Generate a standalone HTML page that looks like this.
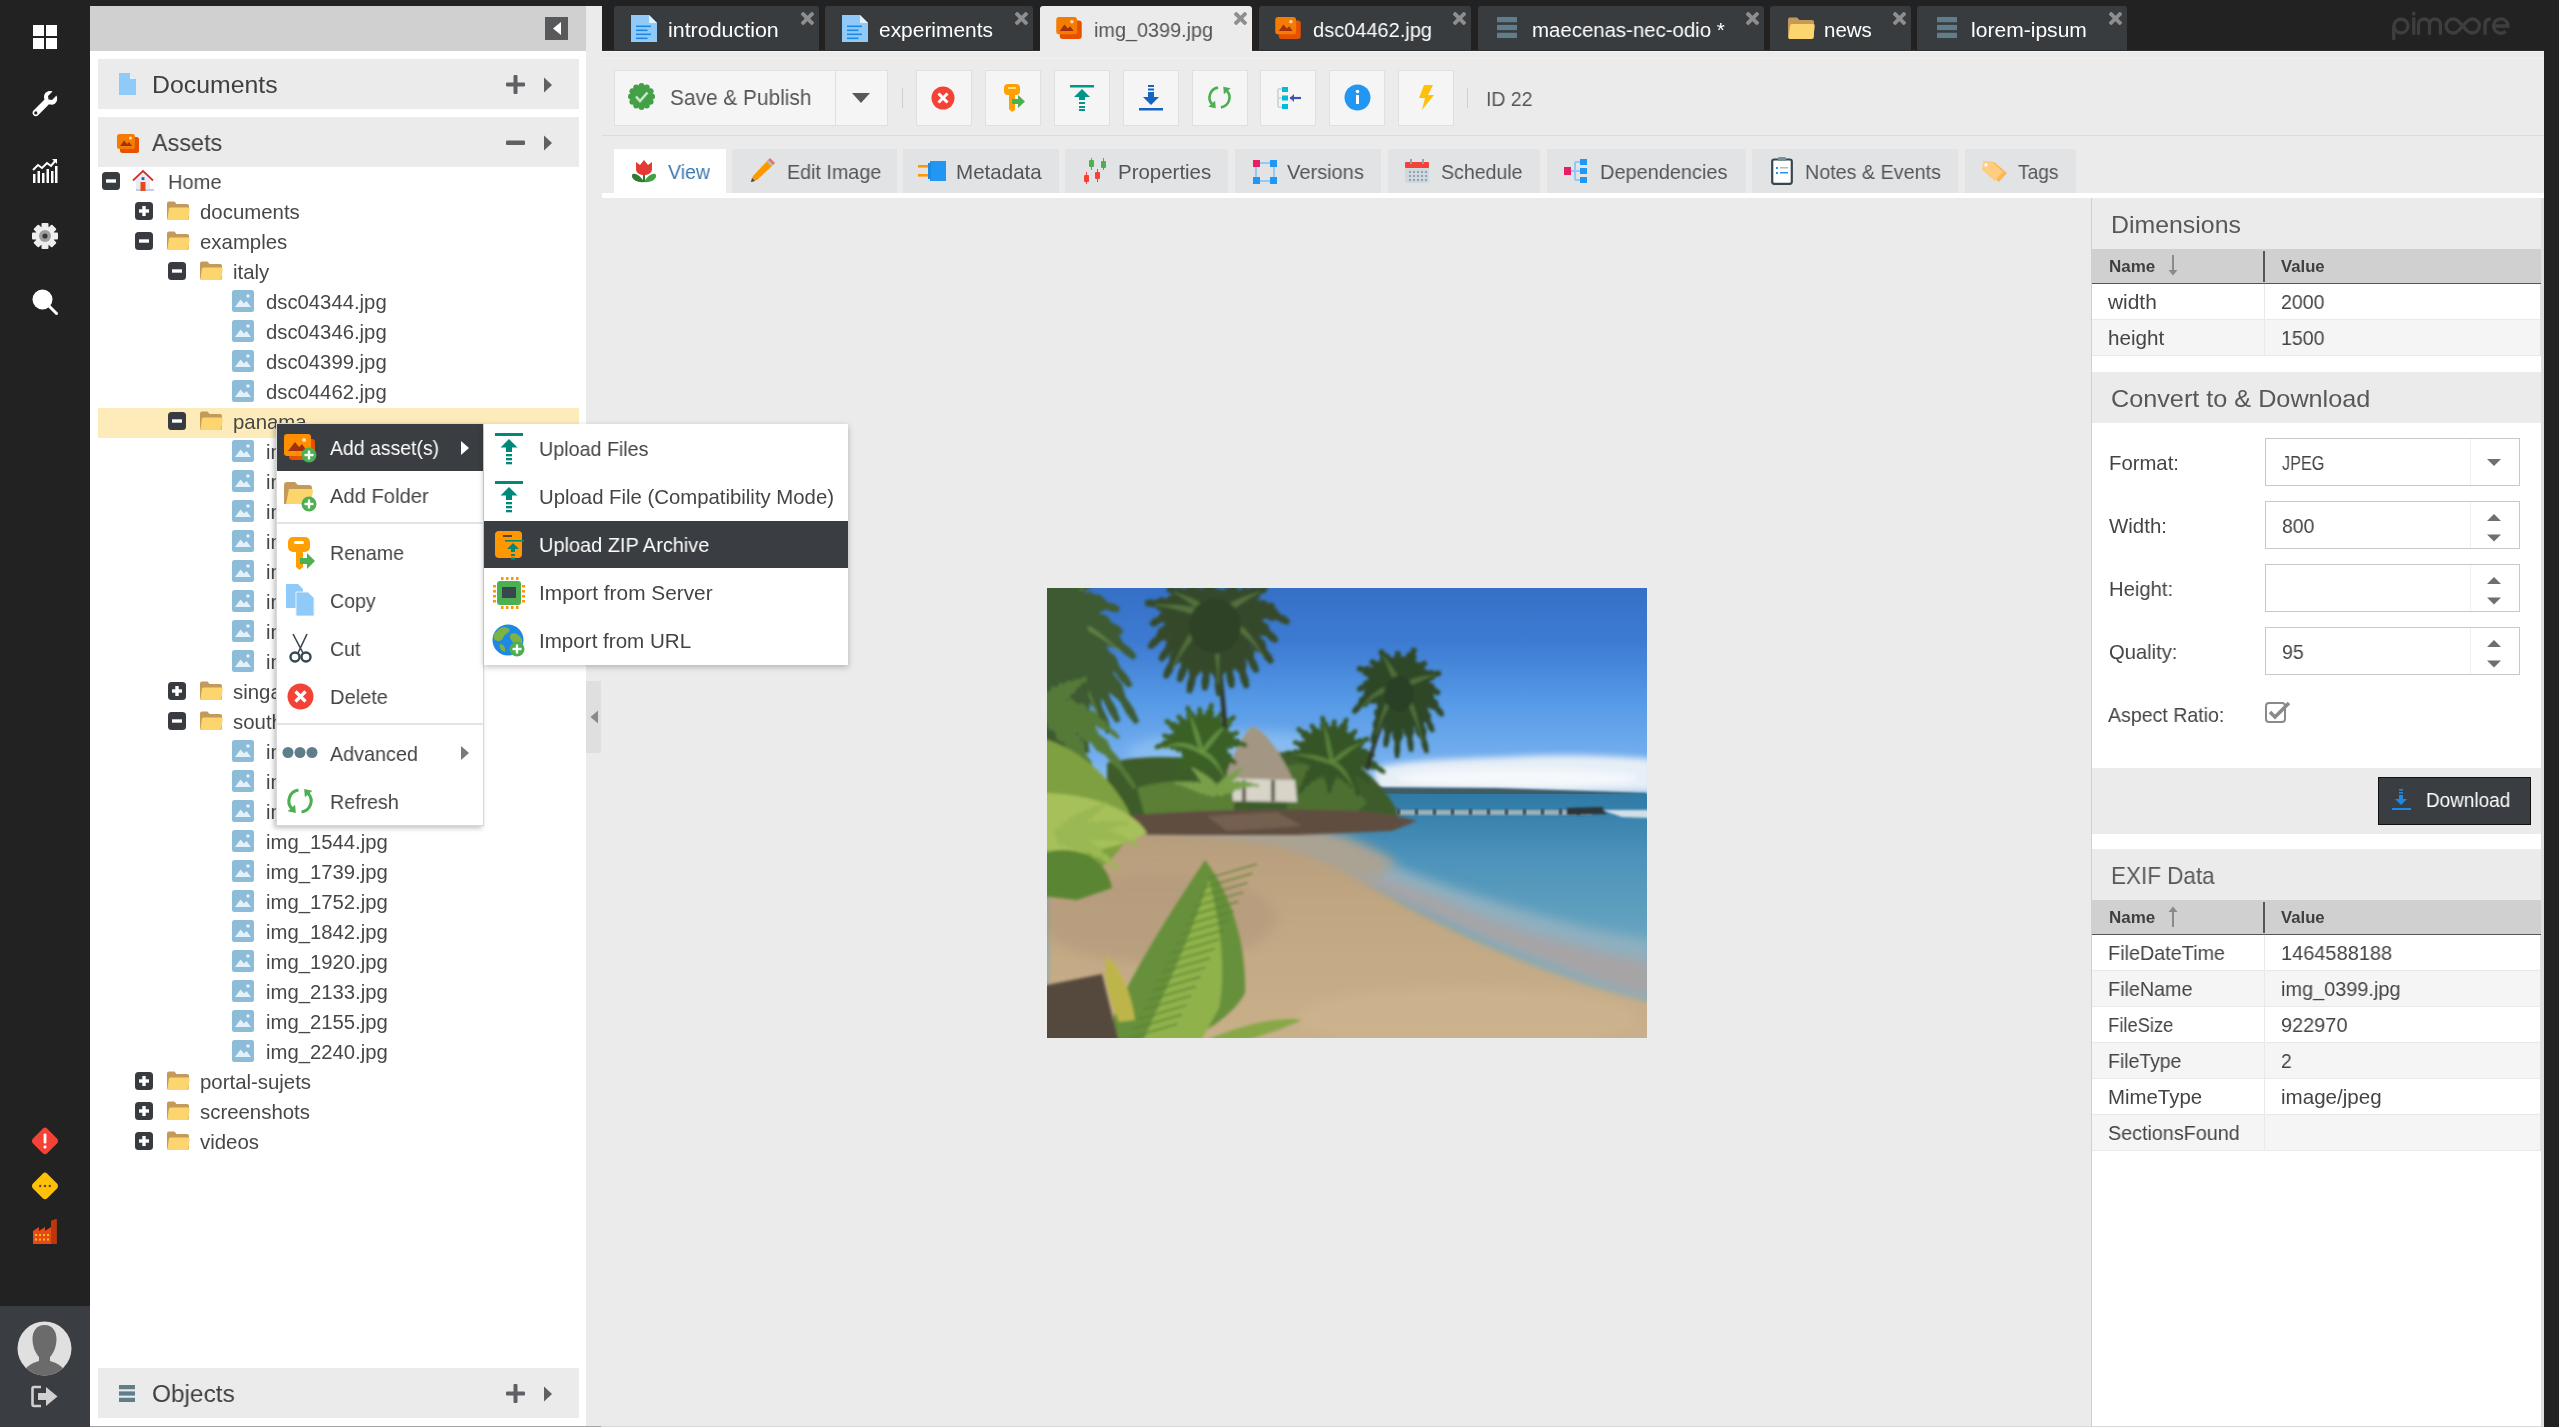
<!DOCTYPE html><html><head><meta charset="utf-8"><style>
*{margin:0;padding:0;box-sizing:border-box}
html,body{width:2559px;height:1427px;overflow:hidden}
body{background:#222;font-family:"Liberation Sans", sans-serif;position:relative}
.a{position:absolute}
.t{white-space:nowrap;line-height:1;will-change:transform}
</style></head><body>
<div class="a" style="left:0;top:1306px;width:90px;height:121px;background:#3a3d41"></div>
<svg class="a" style="left:33px;top:25px" width="24" height="24" viewBox="0 0 24 24"><rect x="0" y="0" width="11" height="11" fill="#fff"/><rect x="13" y="0" width="11" height="11" fill="#fff"/><rect x="0" y="13" width="11" height="11" fill="#fff"/><rect x="13" y="13" width="11" height="11" fill="#fff"/></svg>
<svg class="a" style="left:31px;top:89px" width="28" height="28" viewBox="0 0 28 28"><path d="M25.5 6.5 L21 11 L17.5 10.5 L17 7 L21.5 2.5 C17.5 1 13 3.5 13 8 C13 9 13.2 9.8 13.5 10.6 L2.5 21.6 C1.2 22.9 1.2 25 2.5 26.2 C3.8 27.5 5.8 27.5 7.1 26.2 L18 15.3 C18.8 15.6 19.7 15.8 20.6 15.8 C25 15.8 27.5 11 25.5 6.5 Z" fill="#fff"/><circle cx="4.8" cy="23.9" r="1.6" fill="#222"/></svg>
<svg class="a" style="left:32px;top:158px" width="26" height="25" viewBox="0 0 26 25"><path d="M1 12 L6 7 L10 10 L15 5 L19 8 L24 2" stroke="#fff" stroke-width="2" fill="none"/><path d="M20 1 L25 1 L25 6 Z" fill="#fff"/><rect x="1" y="16" width="2.5" height="9" fill="#fff"/><rect x="5.5" y="13" width="2.5" height="12" fill="#fff"/><rect x="10" y="15" width="2.5" height="10" fill="#fff"/><rect x="14.5" y="11" width="2.5" height="14" fill="#fff"/><rect x="19" y="13" width="2.5" height="12" fill="#fff"/><rect x="23" y="8" width="2.5" height="17" fill="#fff"/></svg>
<svg class="a" style="left:32px;top:223px" width="26" height="26" viewBox="0 0 26 26"><g transform="translate(13,13)"><rect x="-3.5" y="-13" width="7" height="6" rx="1" fill="#eee" transform="rotate(0)"/><rect x="-3.5" y="-13" width="7" height="6" rx="1" fill="#eee" transform="rotate(45)"/><rect x="-3.5" y="-13" width="7" height="6" rx="1" fill="#eee" transform="rotate(90)"/><rect x="-3.5" y="-13" width="7" height="6" rx="1" fill="#eee" transform="rotate(135)"/><rect x="-3.5" y="-13" width="7" height="6" rx="1" fill="#eee" transform="rotate(180)"/><rect x="-3.5" y="-13" width="7" height="6" rx="1" fill="#eee" transform="rotate(225)"/><rect x="-3.5" y="-13" width="7" height="6" rx="1" fill="#eee" transform="rotate(270)"/><rect x="-3.5" y="-13" width="7" height="6" rx="1" fill="#eee" transform="rotate(315)"/><circle r="9.5" fill="#eee"/><circle r="6" fill="#9e9e9e"/><circle r="2.6" fill="#3a3a3a"/></g></svg>
<svg class="a" style="left:32px;top:289px" width="26" height="26" viewBox="0 0 26 26"><circle cx="10.5" cy="10.5" r="10" fill="#fff"/><path d="M17 17 L24.5 24.5" stroke="#fff" stroke-width="3" stroke-linecap="round"/></svg>
<svg class="a" style="left:31px;top:1127px" width="28" height="28" viewBox="0 0 28 28"><path d="M14 0.5 Q15 0.5 16 1.5 L26.5 12 Q27.5 14 26.5 16 L16 26.5 Q14 27.8 12 26.5 L1.5 16 Q0.3 14 1.5 12 L12 1.5 Q13 0.5 14 0.5 Z" fill="#f44336"/><rect x="12.6" y="6.5" width="2.8" height="10" rx="1" fill="#fff"/><rect x="12.6" y="18.6" width="2.8" height="2.8" rx="1" fill="#fff"/></svg>
<svg class="a" style="left:31px;top:1172px" width="28" height="28" viewBox="0 0 28 28"><path d="M14 0.5 Q15 0.5 16 1.5 L26.5 12 Q27.5 14 26.5 16 L16 26.5 Q14 27.8 12 26.5 L1.5 16 Q0.3 14 1.5 12 L12 1.5 Q13 0.5 14 0.5 Z" fill="#ffc107"/><circle cx="9.2" cy="14" r="1.2" fill="#5d4037"/><circle cx="14" cy="14" r="1.2" fill="#5d4037"/><circle cx="18.8" cy="14" r="1.2" fill="#5d4037"/></svg>
<svg class="a" style="left:33px;top:1219px" width="24" height="25" viewBox="0 0 24 25"><path d="M0 12 L6 8 L6 12 L12 8 L12 12 L18 8 L18 2 L23.5 0 L23.5 25 L0 25 Z" fill="#e64a19"/><path d="M18 2 L23.5 0 L23.5 25 L18 25 Z" fill="#bf360c"/><rect x="2" y="15.0" width="2" height="2" fill="#ffc107"/><rect x="2" y="19.5" width="2" height="2" fill="#ffc107"/><rect x="6" y="15.0" width="2" height="2" fill="#ffc107"/><rect x="6" y="19.5" width="2" height="2" fill="#ffc107"/><rect x="10" y="15.0" width="2" height="2" fill="#ffc107"/><rect x="10" y="19.5" width="2" height="2" fill="#ffc107"/><rect x="14" y="15.0" width="2" height="2" fill="#ffc107"/><rect x="14" y="19.5" width="2" height="2" fill="#ffc107"/></svg>
<svg class="a" style="left:17px;top:1321px" width="55" height="55" viewBox="0 0 55 55"><defs><clipPath id="avc"><circle cx="27.5" cy="27.5" r="27"/></clipPath></defs><circle cx="27.5" cy="27.5" r="27" fill="#e0e0e0"/><g clip-path="url(#avc)"><path d="M27.5 4 C19 4 15.5 11 15.5 18 C15.5 26 19 33 22 36 L22 40 C14 42 7 47 4 55 L51 55 C48 47 41 42 33 40 L33 36 C36 33 39.5 26 39.5 18 C39.5 11 36 4 27.5 4 Z" fill="#6b6b6b"/></g></svg>
<svg class="a" style="left:31px;top:1385px" width="28" height="23" viewBox="0 0 28 23"><path d="M10 2 L3 2 Q1.5 2 1.5 3.5 L1.5 19.5 Q1.5 21 3 21 L10 21" stroke="#d0d0d0" stroke-width="2.6" fill="none"/><path d="M7 8 L15 8 L15 2 L26.5 11.5 L15 21 L15 15 L7 15 Z" fill="#d0d0d0"/></svg>
<div class="a" style="left:90px;top:6px;width:496px;height:1421px;background:#fff"></div>
<div class="a" style="left:90px;top:6px;width:496px;height:45px;background:#d0d0d0"></div>
<div class="a" style="left:545px;top:17px;width:23px;height:23px;background:#58595b"></div>
<svg class="a" style="left:551px;top:21px" width="12" height="15" viewBox="0 0 12 15"><path d="M10 1 L2 7.5 L10 14 Z" fill="#fff"/></svg>
<div class="a" style="left:98px;top:59px;width:481px;height:50px;background:#ebebeb"></div>
<svg class="a" style="left:119px;top:73px" width="17" height="22" viewBox="0 0 17 22"><path d="M0 0 L11 0 L17 6 L17 22 L0 22 Z" fill="#90caf9"/><path d="M11 0 L17 6 L11 6 Z" fill="#e3f2fd"/></svg>
<div class="a t" style="left:152px;top:72.61px;font-size:24.8px;color:#404040;font-weight:normal;transform:scaleX(1.0013);transform-origin:0 0;">Documents</div>
<svg class="a" style="left:505px;top:74px" width="21" height="21" viewBox="0 0 21 21"><rect x="8.5" y="1" width="4" height="19" rx="1" fill="#5f6063"/><rect x="1" y="8.5" width="19" height="4" rx="1" fill="#5f6063"/></svg>
<svg class="a" style="left:543px;top:77px" width="10" height="16" viewBox="0 0 10 16"><path d="M1 0.5 L9 8 L1 15.5 Z" fill="#5f6063"/></svg>
<div class="a" style="left:98px;top:117px;width:481px;height:50px;background:#ebebeb"></div>
<svg class="a" style="left:117px;top:134px" width="22" height="19" viewBox="0 0 22 19"><rect x="3" y="3" width="19" height="16" rx="2.5" fill="#e65100"/><rect x="0" y="0" width="18" height="15" rx="2.5" fill="#f57c00"/><path d="M3 12 L7 6.5 L10 10 L12 8 L15 12 Z" fill="#a1300c"/><circle cx="13.5" cy="4" r="1.5" fill="#ffe0b2"/></svg>
<div class="a t" style="left:152px;top:130.61px;font-size:24.8px;color:#404040;font-weight:normal;transform:scaleX(0.9432);transform-origin:0 0;">Assets</div>
<svg class="a" style="left:505px;top:132px" width="21" height="21" viewBox="0 0 21 21"><rect x="1" y="8.5" width="19" height="4.5" rx="1" fill="#5f6063"/></svg>
<svg class="a" style="left:543px;top:135px" width="10" height="16" viewBox="0 0 10 16"><path d="M1 0.5 L9 8 L1 15.5 Z" fill="#5f6063"/></svg>
<div class="a" style="left:98px;top:1368px;width:481px;height:50px;background:#ebebeb"></div>
<svg class="a" style="left:119px;top:1385px" width="16" height="17" viewBox="0 0 16 17"><rect x="0" y="0" width="16" height="4.25" fill="#607d8b"/><rect x="0" y="6.375" width="16" height="4.25" fill="#607d8b"/><rect x="0" y="12.75" width="16" height="4.25" fill="#607d8b"/></svg>
<div class="a t" style="left:152px;top:1381.61px;font-size:24.8px;color:#404040;font-weight:normal;transform:scaleX(0.9836);transform-origin:0 0;">Objects</div>
<svg class="a" style="left:505px;top:1383px" width="21" height="21" viewBox="0 0 21 21"><rect x="8.5" y="1" width="4" height="19" rx="1" fill="#5f6063"/><rect x="1" y="8.5" width="19" height="4" rx="1" fill="#5f6063"/></svg>
<svg class="a" style="left:543px;top:1386px" width="10" height="16" viewBox="0 0 10 16"><path d="M1 0.5 L9 8 L1 15.5 Z" fill="#5f6063"/></svg>
<div class="a" style="left:98px;top:408px;width:481px;height:30px;background:#fdebb9"></div>
<svg class="a" style="left:102px;top:172px" width="18" height="18" viewBox="0 0 18 18"><rect x="0" y="0" width="18" height="18" rx="3.5" fill="#383b3f"/><rect x="4" y="7.3" width="10" height="3.4" fill="#fff"/></svg>
<svg class="a" style="left:132px;top:169px" width="23" height="23" viewBox="0 0 23 23"><path d="M4 11 L4 21 L18 21 L18 11 L11 5 Z" fill="#e8eaf6"/><rect x="4" y="20" width="18" height="2" fill="#c5cae9"/><path d="M1 11.5 L11 2 L21 11.5" stroke="#d32f2f" stroke-width="1.8" fill="none"/><rect x="8.5" y="13" width="5" height="9" fill="#e64a19"/><rect x="9.6" y="8.2" width="2.8" height="2.8" fill="#1565c0"/></svg>
<div class="a t" style="left:167.5px;top:171.96px;font-size:20.6px;color:#474747;font-weight:normal;transform:scaleX(0.9754);transform-origin:0 0;">Home</div>
<svg class="a" style="left:135px;top:202px" width="18" height="18" viewBox="0 0 18 18"><rect x="0" y="0" width="18" height="18" rx="3.5" fill="#383b3f"/><rect x="4" y="7.3" width="10" height="3.4" fill="#fff"/><rect x="7.3" y="4" width="3.4" height="10" fill="#fff"/></svg>
<svg class="a" style="left:166px;top:201px" width="24" height="20" viewBox="0 0 24 20"><path d="M1 2.5 Q1 0.5 3 0.5 L8.5 0.5 L10.5 3 L21 3 Q23 3 23 5 L23 17 Q23 19 21 19 L3 19 Q1 19 1 17 Z" fill="#c49a5a"/><path d="M4.5 6.5 L22 6.5 Q24 6.5 23.7 8.5 L22.5 17 Q22.2 19 20.2 19 L3 19 Q1.3 19 1.6 17 L2.8 8.3 Q3 6.5 4.5 6.5 Z" fill="#fdd56e"/></svg>
<div class="a t" style="left:200px;top:202.13px;font-size:20.4px;color:#474747;font-weight:normal;">documents</div>
<svg class="a" style="left:135px;top:232px" width="18" height="18" viewBox="0 0 18 18"><rect x="0" y="0" width="18" height="18" rx="3.5" fill="#383b3f"/><rect x="4" y="7.3" width="10" height="3.4" fill="#fff"/></svg>
<svg class="a" style="left:166px;top:231px" width="24" height="20" viewBox="0 0 24 20"><path d="M1 2.5 Q1 0.5 3 0.5 L8.5 0.5 L10.5 3 L21 3 Q23 3 23 5 L23 17 Q23 19 21 19 L3 19 Q1 19 1 17 Z" fill="#c49a5a"/><path d="M4.5 6.5 L22 6.5 Q24 6.5 23.7 8.5 L22.5 17 Q22.2 19 20.2 19 L3 19 Q1.3 19 1.6 17 L2.8 8.3 Q3 6.5 4.5 6.5 Z" fill="#fdd56e"/></svg>
<div class="a t" style="left:200px;top:232.13px;font-size:20.4px;color:#474747;font-weight:normal;">examples</div>
<svg class="a" style="left:168px;top:262px" width="18" height="18" viewBox="0 0 18 18"><rect x="0" y="0" width="18" height="18" rx="3.5" fill="#383b3f"/><rect x="4" y="7.3" width="10" height="3.4" fill="#fff"/></svg>
<svg class="a" style="left:199px;top:261px" width="24" height="20" viewBox="0 0 24 20"><path d="M1 2.5 Q1 0.5 3 0.5 L8.5 0.5 L10.5 3 L21 3 Q23 3 23 5 L23 17 Q23 19 21 19 L3 19 Q1 19 1 17 Z" fill="#c49a5a"/><path d="M4.5 6.5 L22 6.5 Q24 6.5 23.7 8.5 L22.5 17 Q22.2 19 20.2 19 L3 19 Q1.3 19 1.6 17 L2.8 8.3 Q3 6.5 4.5 6.5 Z" fill="#fdd56e"/></svg>
<div class="a t" style="left:233px;top:262.13px;font-size:20.4px;color:#474747;font-weight:normal;">italy</div>
<svg class="a" style="left:232px;top:290px" width="22" height="22" viewBox="0 0 22 22"><rect x="0" y="0" width="22" height="22" rx="2.5" fill="#8dbcd8"/><path d="M3 17 L8.5 9.5 L12 13.5 L14.5 11 L19 17 Z" fill="#e3f1fa"/><circle cx="16" cy="6" r="1.8" fill="#e3f1fa"/></svg>
<div class="a t" style="left:265.5px;top:292.22px;font-size:20.3px;color:#474747;font-weight:normal;">dsc04344.jpg</div>
<svg class="a" style="left:232px;top:320px" width="22" height="22" viewBox="0 0 22 22"><rect x="0" y="0" width="22" height="22" rx="2.5" fill="#8dbcd8"/><path d="M3 17 L8.5 9.5 L12 13.5 L14.5 11 L19 17 Z" fill="#e3f1fa"/><circle cx="16" cy="6" r="1.8" fill="#e3f1fa"/></svg>
<div class="a t" style="left:265.5px;top:322.22px;font-size:20.3px;color:#474747;font-weight:normal;">dsc04346.jpg</div>
<svg class="a" style="left:232px;top:350px" width="22" height="22" viewBox="0 0 22 22"><rect x="0" y="0" width="22" height="22" rx="2.5" fill="#8dbcd8"/><path d="M3 17 L8.5 9.5 L12 13.5 L14.5 11 L19 17 Z" fill="#e3f1fa"/><circle cx="16" cy="6" r="1.8" fill="#e3f1fa"/></svg>
<div class="a t" style="left:265.5px;top:352.22px;font-size:20.3px;color:#474747;font-weight:normal;">dsc04399.jpg</div>
<svg class="a" style="left:232px;top:380px" width="22" height="22" viewBox="0 0 22 22"><rect x="0" y="0" width="22" height="22" rx="2.5" fill="#8dbcd8"/><path d="M3 17 L8.5 9.5 L12 13.5 L14.5 11 L19 17 Z" fill="#e3f1fa"/><circle cx="16" cy="6" r="1.8" fill="#e3f1fa"/></svg>
<div class="a t" style="left:265.5px;top:382.22px;font-size:20.3px;color:#474747;font-weight:normal;">dsc04462.jpg</div>
<svg class="a" style="left:168px;top:412px" width="18" height="18" viewBox="0 0 18 18"><rect x="0" y="0" width="18" height="18" rx="3.5" fill="#383b3f"/><rect x="4" y="7.3" width="10" height="3.4" fill="#fff"/></svg>
<svg class="a" style="left:199px;top:411px" width="24" height="20" viewBox="0 0 24 20"><path d="M1 2.5 Q1 0.5 3 0.5 L8.5 0.5 L10.5 3 L21 3 Q23 3 23 5 L23 17 Q23 19 21 19 L3 19 Q1 19 1 17 Z" fill="#c49a5a"/><path d="M4.5 6.5 L22 6.5 Q24 6.5 23.7 8.5 L22.5 17 Q22.2 19 20.2 19 L3 19 Q1.3 19 1.6 17 L2.8 8.3 Q3 6.5 4.5 6.5 Z" fill="#fdd56e"/></svg>
<div class="a t" style="left:233px;top:412.13px;font-size:20.4px;color:#474747;font-weight:normal;">panama</div>
<svg class="a" style="left:232px;top:440px" width="22" height="22" viewBox="0 0 22 22"><rect x="0" y="0" width="22" height="22" rx="2.5" fill="#8dbcd8"/><path d="M3 17 L8.5 9.5 L12 13.5 L14.5 11 L19 17 Z" fill="#e3f1fa"/><circle cx="16" cy="6" r="1.8" fill="#e3f1fa"/></svg>
<div class="a t" style="left:265.5px;top:442.22px;font-size:20.3px;color:#474747;font-weight:normal;">img_0037.jpg</div>
<svg class="a" style="left:232px;top:470px" width="22" height="22" viewBox="0 0 22 22"><rect x="0" y="0" width="22" height="22" rx="2.5" fill="#8dbcd8"/><path d="M3 17 L8.5 9.5 L12 13.5 L14.5 11 L19 17 Z" fill="#e3f1fa"/><circle cx="16" cy="6" r="1.8" fill="#e3f1fa"/></svg>
<div class="a t" style="left:265.5px;top:472.22px;font-size:20.3px;color:#474747;font-weight:normal;">img_0037.jpg</div>
<svg class="a" style="left:232px;top:500px" width="22" height="22" viewBox="0 0 22 22"><rect x="0" y="0" width="22" height="22" rx="2.5" fill="#8dbcd8"/><path d="M3 17 L8.5 9.5 L12 13.5 L14.5 11 L19 17 Z" fill="#e3f1fa"/><circle cx="16" cy="6" r="1.8" fill="#e3f1fa"/></svg>
<div class="a t" style="left:265.5px;top:502.22px;font-size:20.3px;color:#474747;font-weight:normal;">img_0037.jpg</div>
<svg class="a" style="left:232px;top:530px" width="22" height="22" viewBox="0 0 22 22"><rect x="0" y="0" width="22" height="22" rx="2.5" fill="#8dbcd8"/><path d="M3 17 L8.5 9.5 L12 13.5 L14.5 11 L19 17 Z" fill="#e3f1fa"/><circle cx="16" cy="6" r="1.8" fill="#e3f1fa"/></svg>
<div class="a t" style="left:265.5px;top:532.22px;font-size:20.3px;color:#474747;font-weight:normal;">img_0037.jpg</div>
<svg class="a" style="left:232px;top:560px" width="22" height="22" viewBox="0 0 22 22"><rect x="0" y="0" width="22" height="22" rx="2.5" fill="#8dbcd8"/><path d="M3 17 L8.5 9.5 L12 13.5 L14.5 11 L19 17 Z" fill="#e3f1fa"/><circle cx="16" cy="6" r="1.8" fill="#e3f1fa"/></svg>
<div class="a t" style="left:265.5px;top:562.22px;font-size:20.3px;color:#474747;font-weight:normal;">img_0037.jpg</div>
<svg class="a" style="left:232px;top:590px" width="22" height="22" viewBox="0 0 22 22"><rect x="0" y="0" width="22" height="22" rx="2.5" fill="#8dbcd8"/><path d="M3 17 L8.5 9.5 L12 13.5 L14.5 11 L19 17 Z" fill="#e3f1fa"/><circle cx="16" cy="6" r="1.8" fill="#e3f1fa"/></svg>
<div class="a t" style="left:265.5px;top:592.22px;font-size:20.3px;color:#474747;font-weight:normal;">img_0037.jpg</div>
<svg class="a" style="left:232px;top:620px" width="22" height="22" viewBox="0 0 22 22"><rect x="0" y="0" width="22" height="22" rx="2.5" fill="#8dbcd8"/><path d="M3 17 L8.5 9.5 L12 13.5 L14.5 11 L19 17 Z" fill="#e3f1fa"/><circle cx="16" cy="6" r="1.8" fill="#e3f1fa"/></svg>
<div class="a t" style="left:265.5px;top:622.22px;font-size:20.3px;color:#474747;font-weight:normal;">img_0037.jpg</div>
<svg class="a" style="left:232px;top:650px" width="22" height="22" viewBox="0 0 22 22"><rect x="0" y="0" width="22" height="22" rx="2.5" fill="#8dbcd8"/><path d="M3 17 L8.5 9.5 L12 13.5 L14.5 11 L19 17 Z" fill="#e3f1fa"/><circle cx="16" cy="6" r="1.8" fill="#e3f1fa"/></svg>
<div class="a t" style="left:265.5px;top:652.22px;font-size:20.3px;color:#474747;font-weight:normal;">img_0037.jpg</div>
<svg class="a" style="left:168px;top:682px" width="18" height="18" viewBox="0 0 18 18"><rect x="0" y="0" width="18" height="18" rx="3.5" fill="#383b3f"/><rect x="4" y="7.3" width="10" height="3.4" fill="#fff"/><rect x="7.3" y="4" width="3.4" height="10" fill="#fff"/></svg>
<svg class="a" style="left:199px;top:681px" width="24" height="20" viewBox="0 0 24 20"><path d="M1 2.5 Q1 0.5 3 0.5 L8.5 0.5 L10.5 3 L21 3 Q23 3 23 5 L23 17 Q23 19 21 19 L3 19 Q1 19 1 17 Z" fill="#c49a5a"/><path d="M4.5 6.5 L22 6.5 Q24 6.5 23.7 8.5 L22.5 17 Q22.2 19 20.2 19 L3 19 Q1.3 19 1.6 17 L2.8 8.3 Q3 6.5 4.5 6.5 Z" fill="#fdd56e"/></svg>
<div class="a t" style="left:233px;top:682.13px;font-size:20.4px;color:#474747;font-weight:normal;">singapore</div>
<svg class="a" style="left:168px;top:712px" width="18" height="18" viewBox="0 0 18 18"><rect x="0" y="0" width="18" height="18" rx="3.5" fill="#383b3f"/><rect x="4" y="7.3" width="10" height="3.4" fill="#fff"/></svg>
<svg class="a" style="left:199px;top:711px" width="24" height="20" viewBox="0 0 24 20"><path d="M1 2.5 Q1 0.5 3 0.5 L8.5 0.5 L10.5 3 L21 3 Q23 3 23 5 L23 17 Q23 19 21 19 L3 19 Q1 19 1 17 Z" fill="#c49a5a"/><path d="M4.5 6.5 L22 6.5 Q24 6.5 23.7 8.5 L22.5 17 Q22.2 19 20.2 19 L3 19 Q1.3 19 1.6 17 L2.8 8.3 Q3 6.5 4.5 6.5 Z" fill="#fdd56e"/></svg>
<div class="a t" style="left:233px;top:712.13px;font-size:20.4px;color:#474747;font-weight:normal;">south-africa</div>
<svg class="a" style="left:232px;top:740px" width="22" height="22" viewBox="0 0 22 22"><rect x="0" y="0" width="22" height="22" rx="2.5" fill="#8dbcd8"/><path d="M3 17 L8.5 9.5 L12 13.5 L14.5 11 L19 17 Z" fill="#e3f1fa"/><circle cx="16" cy="6" r="1.8" fill="#e3f1fa"/></svg>
<div class="a t" style="left:265.5px;top:742.22px;font-size:20.3px;color:#474747;font-weight:normal;">img_1214.jpg</div>
<svg class="a" style="left:232px;top:770px" width="22" height="22" viewBox="0 0 22 22"><rect x="0" y="0" width="22" height="22" rx="2.5" fill="#8dbcd8"/><path d="M3 17 L8.5 9.5 L12 13.5 L14.5 11 L19 17 Z" fill="#e3f1fa"/><circle cx="16" cy="6" r="1.8" fill="#e3f1fa"/></svg>
<div class="a t" style="left:265.5px;top:772.22px;font-size:20.3px;color:#474747;font-weight:normal;">img_1214.jpg</div>
<svg class="a" style="left:232px;top:800px" width="22" height="22" viewBox="0 0 22 22"><rect x="0" y="0" width="22" height="22" rx="2.5" fill="#8dbcd8"/><path d="M3 17 L8.5 9.5 L12 13.5 L14.5 11 L19 17 Z" fill="#e3f1fa"/><circle cx="16" cy="6" r="1.8" fill="#e3f1fa"/></svg>
<div class="a t" style="left:265.5px;top:802.22px;font-size:20.3px;color:#474747;font-weight:normal;">img_1214.jpg</div>
<svg class="a" style="left:232px;top:830px" width="22" height="22" viewBox="0 0 22 22"><rect x="0" y="0" width="22" height="22" rx="2.5" fill="#8dbcd8"/><path d="M3 17 L8.5 9.5 L12 13.5 L14.5 11 L19 17 Z" fill="#e3f1fa"/><circle cx="16" cy="6" r="1.8" fill="#e3f1fa"/></svg>
<div class="a t" style="left:265.5px;top:832.22px;font-size:20.3px;color:#474747;font-weight:normal;">img_1544.jpg</div>
<svg class="a" style="left:232px;top:860px" width="22" height="22" viewBox="0 0 22 22"><rect x="0" y="0" width="22" height="22" rx="2.5" fill="#8dbcd8"/><path d="M3 17 L8.5 9.5 L12 13.5 L14.5 11 L19 17 Z" fill="#e3f1fa"/><circle cx="16" cy="6" r="1.8" fill="#e3f1fa"/></svg>
<div class="a t" style="left:265.5px;top:862.22px;font-size:20.3px;color:#474747;font-weight:normal;">img_1739.jpg</div>
<svg class="a" style="left:232px;top:890px" width="22" height="22" viewBox="0 0 22 22"><rect x="0" y="0" width="22" height="22" rx="2.5" fill="#8dbcd8"/><path d="M3 17 L8.5 9.5 L12 13.5 L14.5 11 L19 17 Z" fill="#e3f1fa"/><circle cx="16" cy="6" r="1.8" fill="#e3f1fa"/></svg>
<div class="a t" style="left:265.5px;top:892.22px;font-size:20.3px;color:#474747;font-weight:normal;">img_1752.jpg</div>
<svg class="a" style="left:232px;top:920px" width="22" height="22" viewBox="0 0 22 22"><rect x="0" y="0" width="22" height="22" rx="2.5" fill="#8dbcd8"/><path d="M3 17 L8.5 9.5 L12 13.5 L14.5 11 L19 17 Z" fill="#e3f1fa"/><circle cx="16" cy="6" r="1.8" fill="#e3f1fa"/></svg>
<div class="a t" style="left:265.5px;top:922.22px;font-size:20.3px;color:#474747;font-weight:normal;">img_1842.jpg</div>
<svg class="a" style="left:232px;top:950px" width="22" height="22" viewBox="0 0 22 22"><rect x="0" y="0" width="22" height="22" rx="2.5" fill="#8dbcd8"/><path d="M3 17 L8.5 9.5 L12 13.5 L14.5 11 L19 17 Z" fill="#e3f1fa"/><circle cx="16" cy="6" r="1.8" fill="#e3f1fa"/></svg>
<div class="a t" style="left:265.5px;top:952.22px;font-size:20.3px;color:#474747;font-weight:normal;">img_1920.jpg</div>
<svg class="a" style="left:232px;top:980px" width="22" height="22" viewBox="0 0 22 22"><rect x="0" y="0" width="22" height="22" rx="2.5" fill="#8dbcd8"/><path d="M3 17 L8.5 9.5 L12 13.5 L14.5 11 L19 17 Z" fill="#e3f1fa"/><circle cx="16" cy="6" r="1.8" fill="#e3f1fa"/></svg>
<div class="a t" style="left:265.5px;top:982.22px;font-size:20.3px;color:#474747;font-weight:normal;">img_2133.jpg</div>
<svg class="a" style="left:232px;top:1010px" width="22" height="22" viewBox="0 0 22 22"><rect x="0" y="0" width="22" height="22" rx="2.5" fill="#8dbcd8"/><path d="M3 17 L8.5 9.5 L12 13.5 L14.5 11 L19 17 Z" fill="#e3f1fa"/><circle cx="16" cy="6" r="1.8" fill="#e3f1fa"/></svg>
<div class="a t" style="left:265.5px;top:1012.22px;font-size:20.3px;color:#474747;font-weight:normal;">img_2155.jpg</div>
<svg class="a" style="left:232px;top:1040px" width="22" height="22" viewBox="0 0 22 22"><rect x="0" y="0" width="22" height="22" rx="2.5" fill="#8dbcd8"/><path d="M3 17 L8.5 9.5 L12 13.5 L14.5 11 L19 17 Z" fill="#e3f1fa"/><circle cx="16" cy="6" r="1.8" fill="#e3f1fa"/></svg>
<div class="a t" style="left:265.5px;top:1042.22px;font-size:20.3px;color:#474747;font-weight:normal;">img_2240.jpg</div>
<svg class="a" style="left:135px;top:1072px" width="18" height="18" viewBox="0 0 18 18"><rect x="0" y="0" width="18" height="18" rx="3.5" fill="#383b3f"/><rect x="4" y="7.3" width="10" height="3.4" fill="#fff"/><rect x="7.3" y="4" width="3.4" height="10" fill="#fff"/></svg>
<svg class="a" style="left:166px;top:1071px" width="24" height="20" viewBox="0 0 24 20"><path d="M1 2.5 Q1 0.5 3 0.5 L8.5 0.5 L10.5 3 L21 3 Q23 3 23 5 L23 17 Q23 19 21 19 L3 19 Q1 19 1 17 Z" fill="#c49a5a"/><path d="M4.5 6.5 L22 6.5 Q24 6.5 23.7 8.5 L22.5 17 Q22.2 19 20.2 19 L3 19 Q1.3 19 1.6 17 L2.8 8.3 Q3 6.5 4.5 6.5 Z" fill="#fdd56e"/></svg>
<div class="a t" style="left:200px;top:1072.13px;font-size:20.4px;color:#474747;font-weight:normal;">portal-sujets</div>
<svg class="a" style="left:135px;top:1102px" width="18" height="18" viewBox="0 0 18 18"><rect x="0" y="0" width="18" height="18" rx="3.5" fill="#383b3f"/><rect x="4" y="7.3" width="10" height="3.4" fill="#fff"/><rect x="7.3" y="4" width="3.4" height="10" fill="#fff"/></svg>
<svg class="a" style="left:166px;top:1101px" width="24" height="20" viewBox="0 0 24 20"><path d="M1 2.5 Q1 0.5 3 0.5 L8.5 0.5 L10.5 3 L21 3 Q23 3 23 5 L23 17 Q23 19 21 19 L3 19 Q1 19 1 17 Z" fill="#c49a5a"/><path d="M4.5 6.5 L22 6.5 Q24 6.5 23.7 8.5 L22.5 17 Q22.2 19 20.2 19 L3 19 Q1.3 19 1.6 17 L2.8 8.3 Q3 6.5 4.5 6.5 Z" fill="#fdd56e"/></svg>
<div class="a t" style="left:200px;top:1102.13px;font-size:20.4px;color:#474747;font-weight:normal;">screenshots</div>
<svg class="a" style="left:135px;top:1132px" width="18" height="18" viewBox="0 0 18 18"><rect x="0" y="0" width="18" height="18" rx="3.5" fill="#383b3f"/><rect x="4" y="7.3" width="10" height="3.4" fill="#fff"/><rect x="7.3" y="4" width="3.4" height="10" fill="#fff"/></svg>
<svg class="a" style="left:166px;top:1131px" width="24" height="20" viewBox="0 0 24 20"><path d="M1 2.5 Q1 0.5 3 0.5 L8.5 0.5 L10.5 3 L21 3 Q23 3 23 5 L23 17 Q23 19 21 19 L3 19 Q1 19 1 17 Z" fill="#c49a5a"/><path d="M4.5 6.5 L22 6.5 Q24 6.5 23.7 8.5 L22.5 17 Q22.2 19 20.2 19 L3 19 Q1.3 19 1.6 17 L2.8 8.3 Q3 6.5 4.5 6.5 Z" fill="#fdd56e"/></svg>
<div class="a t" style="left:200px;top:1132.13px;font-size:20.4px;color:#474747;font-weight:normal;">videos</div>
<div class="a" style="left:586px;top:6px;width:16px;height:1421px;background:#ebebeb"></div>
<div class="a" style="left:586px;top:681px;width:15px;height:72px;background:#dfdfdf"></div>
<svg class="a" style="left:590px;top:710px" width="9" height="15" viewBox="0 0 9 15"><path d="M8 0.5 L0.5 7 L8 13.5 Z" fill="#8a8a8a"/></svg>
<div class="a" style="left:602px;top:51px;width:1942px;height:1376px;background:#ebebeb"></div>
<div class="a" style="left:614px;top:6px;width:205px;height:45px;background:#393c3f;border-radius:3px 3px 0 0"></div>
<svg class="a" style="left:631px;top:15px" width="26" height="27" viewBox="0 0 26 27"><path d="M0 0 L18 0 L26 8 L26 27 L0 27 Z" fill="#90caf9"/><path d="M18 0 L26 8 L18 8 Z" fill="#e3f2fd"/><rect x="5" y="10.5" width="15" height="1.6" fill="#1e88e5"/><rect x="5" y="14.5" width="11.5" height="1.6" fill="#1e88e5"/><rect x="5" y="18.5" width="15" height="1.6" fill="#1e88e5"/><rect x="5" y="22.5" width="11.5" height="1.6" fill="#1e88e5"/></svg>
<div class="a t" style="left:667.5px;top:19.65px;font-size:20.5px;color:#fff;font-weight:normal;transform:scaleX(1.0445);transform-origin:0 0;">introduction</div>
<svg class="a" style="left:801px;top:12px" width="13" height="13" viewBox="0 0 13 13"><path d="M2.2 2.2 L10.8 10.8 M10.8 2.2 L2.2 10.8" stroke="#8e8e8e" stroke-width="3.8" stroke-linecap="square"/></svg>
<div class="a" style="left:825px;top:6px;width:208px;height:45px;background:#393c3f;border-radius:3px 3px 0 0"></div>
<svg class="a" style="left:842px;top:15px" width="26" height="27" viewBox="0 0 26 27"><path d="M0 0 L18 0 L26 8 L26 27 L0 27 Z" fill="#90caf9"/><path d="M18 0 L26 8 L18 8 Z" fill="#e3f2fd"/><rect x="5" y="10.5" width="15" height="1.6" fill="#1e88e5"/><rect x="5" y="14.5" width="11.5" height="1.6" fill="#1e88e5"/><rect x="5" y="18.5" width="15" height="1.6" fill="#1e88e5"/><rect x="5" y="22.5" width="11.5" height="1.6" fill="#1e88e5"/></svg>
<div class="a t" style="left:878.5px;top:19.65px;font-size:20.5px;color:#fff;font-weight:normal;transform:scaleX(1.0209);transform-origin:0 0;">experiments</div>
<svg class="a" style="left:1015px;top:12px" width="13" height="13" viewBox="0 0 13 13"><path d="M2.2 2.2 L10.8 10.8 M10.8 2.2 L2.2 10.8" stroke="#8e8e8e" stroke-width="3.8" stroke-linecap="square"/></svg>
<div class="a" style="left:1040px;top:6px;width:212px;height:45px;background:#ebebeb;border-radius:3px 3px 0 0"></div>
<svg class="a" style="left:1056px;top:17px" width="26" height="22" viewBox="0 0 22 19"><rect x="3" y="3" width="19" height="16" rx="2.5" fill="#e65100"/><rect x="0" y="0" width="18" height="15" rx="2.5" fill="#f57c00"/><path d="M3 12 L7 6.5 L10 10 L12 8 L15 12 Z" fill="#a1300c"/><circle cx="13.5" cy="4" r="1.5" fill="#ffe0b2"/></svg>
<div class="a t" style="left:1093.5px;top:19.65px;font-size:20.5px;color:#555;font-weight:normal;transform:scaleX(0.9667);transform-origin:0 0;">img_0399.jpg</div>
<svg class="a" style="left:1234px;top:12px" width="13" height="13" viewBox="0 0 13 13"><path d="M2.2 2.2 L10.8 10.8 M10.8 2.2 L2.2 10.8" stroke="#8e8e8e" stroke-width="3.8" stroke-linecap="square"/></svg>
<div class="a" style="left:1259px;top:6px;width:212px;height:45px;background:#393c3f;border-radius:3px 3px 0 0"></div>
<svg class="a" style="left:1275px;top:17px" width="26" height="22" viewBox="0 0 22 19"><rect x="3" y="3" width="19" height="16" rx="2.5" fill="#e65100"/><rect x="0" y="0" width="18" height="15" rx="2.5" fill="#f57c00"/><path d="M3 12 L7 6.5 L10 10 L12 8 L15 12 Z" fill="#a1300c"/><circle cx="13.5" cy="4" r="1.5" fill="#ffe0b2"/></svg>
<div class="a t" style="left:1312.5px;top:19.65px;font-size:20.5px;color:#fff;font-weight:normal;transform:scaleX(0.9757);transform-origin:0 0;">dsc04462.jpg</div>
<svg class="a" style="left:1453px;top:12px" width="13" height="13" viewBox="0 0 13 13"><path d="M2.2 2.2 L10.8 10.8 M10.8 2.2 L2.2 10.8" stroke="#8e8e8e" stroke-width="3.8" stroke-linecap="square"/></svg>
<div class="a" style="left:1478px;top:6px;width:286px;height:45px;background:#393c3f;border-radius:3px 3px 0 0"></div>
<svg class="a" style="left:1497px;top:17px" width="20" height="21" viewBox="0 0 20 21"><rect x="0" y="0" width="20" height="5.25" fill="#607d8b"/><rect x="0" y="7.875" width="20" height="5.25" fill="#607d8b"/><rect x="0" y="15.75" width="20" height="5.25" fill="#607d8b"/></svg>
<div class="a t" style="left:1531.5px;top:19.65px;font-size:20.5px;color:#fff;font-weight:normal;transform:scaleX(0.9947);transform-origin:0 0;">maecenas-nec-odio *</div>
<svg class="a" style="left:1746px;top:12px" width="13" height="13" viewBox="0 0 13 13"><path d="M2.2 2.2 L10.8 10.8 M10.8 2.2 L2.2 10.8" stroke="#8e8e8e" stroke-width="3.8" stroke-linecap="square"/></svg>
<div class="a" style="left:1770px;top:6px;width:141px;height:45px;background:#393c3f;border-radius:3px 3px 0 0"></div>
<svg class="a" style="left:1787px;top:17px" width="28" height="22" viewBox="0 0 28 22"><path d="M1 2.5 Q1 0.5 3 0.5 L10 0.5 L12.5 3 L25 3 Q27 3 27 5 L27 20 Q27 22 25 22 L3 22 Q1 22 1 20 Z" fill="#c49a5a"/><path d="M5 7 L26 7 Q28 7 27.7 9 L26.5 20 Q26.2 22 24.2 22 L3 22 Q1.3 22 1.6 20 L3 9 Q3.2 7 5 7 Z" fill="#fdd56e"/></svg>
<div class="a t" style="left:1823.5px;top:19.65px;font-size:20.5px;color:#fff;font-weight:normal;transform:scaleX(0.9988);transform-origin:0 0;">news</div>
<svg class="a" style="left:1893px;top:12px" width="13" height="13" viewBox="0 0 13 13"><path d="M2.2 2.2 L10.8 10.8 M10.8 2.2 L2.2 10.8" stroke="#8e8e8e" stroke-width="3.8" stroke-linecap="square"/></svg>
<div class="a" style="left:1917px;top:6px;width:210px;height:45px;background:#393c3f;border-radius:3px 3px 0 0"></div>
<svg class="a" style="left:1937px;top:17px" width="20" height="21" viewBox="0 0 20 21"><rect x="0" y="0" width="20" height="5.25" fill="#607d8b"/><rect x="0" y="7.875" width="20" height="5.25" fill="#607d8b"/><rect x="0" y="15.75" width="20" height="5.25" fill="#607d8b"/></svg>
<div class="a t" style="left:1970.5px;top:19.65px;font-size:20.5px;color:#fff;font-weight:normal;transform:scaleX(1.0277);transform-origin:0 0;">lorem-ipsum</div>
<svg class="a" style="left:2109px;top:12px" width="13" height="13" viewBox="0 0 13 13"><path d="M2.2 2.2 L10.8 10.8 M10.8 2.2 L2.2 10.8" stroke="#8e8e8e" stroke-width="3.8" stroke-linecap="square"/></svg>
<svg class="a" style="left:2390px;top:10px" width="122" height="32" viewBox="0 0 122 32"><g stroke="#3e3e3e" stroke-width="3.3" fill="none"><path d="M3.7 30 V16"/><circle cx="11" cy="16" r="7"/><path d="M28.55 24.7 V14 A5.45 5 0 0 1 39.45 14 V24.7 M39.45 14 A5.45 5 0 0 1 50.35 14 V24.7"/><path d="M68.46 11.5 A7 7 0 1 0 68.46 20.5 M76.94 11.5 A7 7 0 1 1 76.94 20.5 M68.46 11.5 L76.94 20.5 M68.46 20.5 L76.94 11.5"/><path d="M95.05 24.7 V14.5 Q95.05 9 100.8 9"/><path d="M103.5 16 H118 A7.2 7.2 0 1 0 115.8 21.2"/></g><rect x="22.1" y="1.8" width="3.3" height="3.6" fill="#3e3e3e"/><rect x="22.1" y="7.4" width="3.3" height="17.3" fill="#3e3e3e"/></svg>
<div class="a" style="left:602px;top:50px;width:1942px;height:1px;background:#2b2e31"></div>
<div class="a" style="left:602px;top:51px;width:1942px;height:1px;background:#f6f6f6"></div>
<div class="a" style="left:602px;top:58px;width:1942px;height:1px;background:#f1f1f1"></div>
<div class="a" style="left:1040px;top:50px;width:212px;height:3px;background:#ebebeb"></div>
<div class="a" style="left:602px;top:135px;width:1942px;height:1px;background:#dcdcdc"></div>
<div class="a" style="left:614px;top:69.5px;width:222px;height:56.0px;background:#f5f5f5;border:1px solid #e0e0e0"></div>
<div class="a" style="left:835px;top:69.5px;width:53px;height:56.0px;background:#f5f5f5;border:1px solid #e0e0e0"></div>
<svg class="a" style="left:628px;top:83px" width="27" height="27" viewBox="0 0 27 27"><g transform="translate(13.5,13.5)"><circle cx="10.50" cy="0.00" r="3" fill="#43a047"/><circle cx="9.09" cy="5.25" r="3" fill="#43a047"/><circle cx="5.25" cy="9.09" r="3" fill="#43a047"/><circle cx="0.00" cy="10.50" r="3" fill="#43a047"/><circle cx="-5.25" cy="9.09" r="3" fill="#43a047"/><circle cx="-9.09" cy="5.25" r="3" fill="#43a047"/><circle cx="-10.50" cy="0.00" r="3" fill="#43a047"/><circle cx="-9.09" cy="-5.25" r="3" fill="#43a047"/><circle cx="-5.25" cy="-9.09" r="3" fill="#43a047"/><circle cx="-0.00" cy="-10.50" r="3" fill="#43a047"/><circle cx="5.25" cy="-9.09" r="3" fill="#43a047"/><circle cx="9.09" cy="-5.25" r="3" fill="#43a047"/><circle r="11" fill="#43a047"/><path d="M-5.5 0 L-1.5 4.5 L6 -4" stroke="#c8e6c9" stroke-width="2.6" fill="none"/></g></svg>
<div class="a t" style="left:669.5px;top:87.18px;font-size:22px;color:#555;font-weight:normal;transform:scaleX(0.9477);transform-origin:0 0;">Save &amp; Publish</div>
<svg class="a" style="left:851px;top:92px" width="20" height="12" viewBox="0 0 20 12"><path d="M1 1 L19 1 L10 11 Z" fill="#5a5a5a"/></svg>
<div class="a" style="left:902px;top:88px;width:1px;height:20px;background:#cfcfcf"></div>
<div class="a" style="left:916px;top:69.5px;width:56px;height:56.0px;background:#f5f5f5;border:1px solid #e0e0e0"></div>
<div class="a" style="left:985px;top:69.5px;width:56px;height:56.0px;background:#f5f5f5;border:1px solid #e0e0e0"></div>
<div class="a" style="left:1054px;top:69.5px;width:56px;height:56.0px;background:#f5f5f5;border:1px solid #e0e0e0"></div>
<div class="a" style="left:1123px;top:69.5px;width:56px;height:56.0px;background:#f5f5f5;border:1px solid #e0e0e0"></div>
<div class="a" style="left:1192px;top:69.5px;width:56px;height:56.0px;background:#f5f5f5;border:1px solid #e0e0e0"></div>
<div class="a" style="left:1260px;top:69.5px;width:56px;height:56.0px;background:#f5f5f5;border:1px solid #e0e0e0"></div>
<div class="a" style="left:1329px;top:69.5px;width:56px;height:56.0px;background:#f5f5f5;border:1px solid #e0e0e0"></div>
<div class="a" style="left:1398px;top:69.5px;width:56px;height:56.0px;background:#f5f5f5;border:1px solid #e0e0e0"></div>
<svg class="a" style="left:931px;top:86px" width="24" height="24" viewBox="0 0 24 24"><circle cx="12" cy="12" r="11.5" fill="#f44336"/><path d="M7.5 7.5 L16.5 16.5 M16.5 7.5 L7.5 16.5" stroke="#fff" stroke-width="3"/></svg>
<svg class="a" style="left:1002px;top:84px" width="24" height="28" viewBox="0 0 24 28"><rect x="2" y="0" width="16" height="11" rx="4" fill="#ffa000"/><rect x="6" y="3" width="8" height="2" fill="#ffe082"/><path d="M7 10 L13 10 L13 26 L10 28 L7 25 Z" fill="#ffa000"/><path d="M10 15 L16 15 L16 11 L23 17.5 L16 24 L16 20 L10 20 Z" fill="#4caf50"/></svg>
<svg class="a" style="left:1070px;top:85px" width="24" height="26" viewBox="0 0 24 26"><rect x="0" y="0" width="24" height="2.5" fill="#009688"/><path d="M12 4 L20 12 L15 12 L15 15 L9 15 L9 12 L4 12 Z" fill="#009688"/><rect x="9" y="17" width="6" height="2" fill="#009688"/><rect x="9" y="21" width="6" height="2" fill="#009688"/><rect x="9" y="24" width="6" height="2" fill="#009688"/></svg>
<svg class="a" style="left:1139px;top:85px" width="24" height="26" viewBox="0 0 24 26"><rect x="9" y="0" width="6" height="2" fill="#1565c0"/><rect x="9" y="3.5" width="6" height="2" fill="#1565c0"/><rect x="9" y="7" width="6" height="5" fill="#1565c0"/><path d="M4 12 L20 12 L12 20 Z" fill="#1565c0"/><rect x="0" y="23" width="24" height="2.5" fill="#1565c0"/></svg>
<svg class="a" style="left:1206px;top:84px" width="27" height="27" viewBox="0 0 27 27"><path d="M12.11 3.60 A10 10 0 0 0 6.07 20.19" stroke="#4caf50" stroke-width="2.6" fill="none"/><path d="M9.75 24.28 L2.39 22.83 L9.08 16.81 Z" fill="#4caf50"/><path d="M14.89 23.40 A10 10 0 0 0 20.93 6.81" stroke="#4caf50" stroke-width="2.6" fill="none"/><path d="M17.25 2.72 L24.61 4.17 L17.92 10.19 Z" fill="#4caf50"/></svg>
<svg class="a" style="left:1275px;top:86px" width="27" height="24" viewBox="0 0 27 24"><path d="M3 3 L3 21 M3 3 L7 3 M3 12 L7 12 M3 21 L7 21" stroke="#cfd8dc" stroke-width="2" fill="none"/><rect x="7" y="1" width="6" height="5" fill="#00bcd4"/><rect x="7" y="9.5" width="6" height="5" fill="#00bcd4"/><rect x="7" y="18" width="6" height="5" fill="#00bcd4"/><path d="M15 12 L26 12" stroke="#3f51b5" stroke-width="2.2"/><path d="M19 8 L15 12 L19 16 Z" fill="#3f51b5"/></svg>
<svg class="a" style="left:1344px;top:84px" width="27" height="27" viewBox="0 0 27 27"><circle cx="13.5" cy="13.5" r="13" fill="#2196f3"/><rect x="12" y="11" width="3" height="9" fill="#fff"/><circle cx="13.5" cy="7.5" r="1.8" fill="#fff"/></svg>
<svg class="a" style="left:1416px;top:85px" width="20" height="25" viewBox="0 0 20 25"><path d="M8 0 L17 0 L12 10 L18 10 L6 25 L9 13 L3 13 Z" fill="#ffc107"/></svg>
<div class="a" style="left:1467px;top:88px;width:1px;height:20px;background:#cfcfcf"></div>
<div class="a t" style="left:1486px;top:88.02px;font-size:21px;color:#555;font-weight:normal;transform:scaleX(0.9264);transform-origin:0 0;">ID 22</div>
<div class="a" style="left:602px;top:193px;width:1942px;height:5px;background:#fff"></div>
<div class="a" style="left:614px;top:149px;width:112px;height:44px;background:#fff"></div>
<svg class="a" style="left:631px;top:158px" width="26" height="26" viewBox="0 0 26 26"><path d="M13 24 C9 16 2 14 1 17 C0 22 8 25 13 24 Z" fill="#2e7d32"/><path d="M13 24 C17 16 24 14 25 17 C26 22 18 25 13 24 Z" fill="#43a047"/><rect x="12" y="14" width="2" height="10" fill="#2e7d32"/><path d="M5 4 L9 7 L13 2 L17 7 L21 4 L21 11 C21 15 17 17 13 17 C9 17 5 15 5 11 Z" fill="#e53935"/></svg>
<div class="a t" style="left:668px;top:162.02px;font-size:20.3px;color:#3d78b0;font-weight:normal;transform:scaleX(0.9625);transform-origin:0 0;">View</div>
<div class="a" style="left:732px;top:149px;width:165px;height:44px;background:#e2e3e5"></div>
<svg class="a" style="left:749px;top:157px" width="26" height="26" viewBox="0 0 26 26"><path d="M4 19 L19 3 L24 8 L8 23 L2 25 Z" fill="#ff9800"/><path d="M19 3 L21 1 L26 6 L24 8 Z" fill="#e57373"/><path d="M17.5 4.5 L19 3 L24 8 L22.5 9.5 Z" fill="#b0bec5"/><path d="M2 25 L3 21 L6 24 Z" fill="#37474f"/></svg>
<div class="a t" style="left:786.5px;top:162.02px;font-size:20.3px;color:#555;font-weight:normal;transform:scaleX(0.9717);transform-origin:0 0;">Edit Image</div>
<div class="a" style="left:903px;top:149px;width:156px;height:44px;background:#e2e3e5"></div>
<svg class="a" style="left:918px;top:160px" width="28" height="22" viewBox="0 0 28 22"><rect x="0" y="5" width="12" height="2.6" fill="#ff9800"/><rect x="0" y="14" width="12" height="2.6" fill="#ff9800"/><rect x="12" y="1" width="16" height="20" fill="#2196f3"/><rect x="10" y="3" width="3" height="16" fill="#1e88e5"/></svg>
<div class="a t" style="left:955.5px;top:162.02px;font-size:20.3px;color:#555;font-weight:normal;transform:scaleX(1.0137);transform-origin:0 0;">Metadata</div>
<div class="a" style="left:1065px;top:149px;width:163px;height:44px;background:#e2e3e5"></div>
<svg class="a" style="left:1081px;top:158px" width="27" height="26" viewBox="0 0 27 26"><rect x="3" y="17" width="5" height="7" rx="1" fill="#f44336"/><rect x="5" y="14" width="1" height="12" fill="#f44336"/><rect x="8" y="2" width="5" height="7" rx="1" fill="#4caf50"/><rect x="10" y="0" width="1" height="12" fill="#4caf50"/><rect x="14" y="14" width="5" height="7" rx="1" fill="#f44336"/><rect x="16" y="11" width="1" height="13" fill="#f44336"/><rect x="20" y="3" width="5" height="7" rx="1" fill="#4caf50"/><rect x="22" y="0" width="1" height="12" fill="#4caf50"/></svg>
<div class="a t" style="left:1117.5px;top:162.02px;font-size:20.3px;color:#555;font-weight:normal;transform:scaleX(1.0084);transform-origin:0 0;">Properties</div>
<div class="a" style="left:1235px;top:149px;width:146px;height:44px;background:#e2e3e5"></div>
<svg class="a" style="left:1253px;top:160px" width="24" height="24" viewBox="0 0 24 24"><path d="M3 3 L21 3 L21 21 L3 21 Z" stroke="#90caf9" stroke-width="2" fill="none"/><rect x="0" y="0" width="7" height="7" fill="#e91e63"/><rect x="17" y="0" width="7" height="7" fill="#2196f3"/><rect x="0" y="17" width="7" height="7" fill="#2196f3"/><rect x="17" y="17" width="7" height="7" fill="#2196f3"/></svg>
<div class="a t" style="left:1286.5px;top:162.02px;font-size:20.3px;color:#555;font-weight:normal;transform:scaleX(0.9889);transform-origin:0 0;">Versions</div>
<div class="a" style="left:1388px;top:149px;width:152px;height:44px;background:#e2e3e5"></div>
<svg class="a" style="left:1405px;top:159px" width="24" height="24" viewBox="0 0 24 24"><rect x="0" y="3" width="24" height="21" rx="2" fill="#cfd8dc"/><rect x="0" y="3" width="24" height="6" rx="1" fill="#f44336"/><rect x="5" y="0" width="2" height="5" fill="#90a4ae"/><rect x="17" y="0" width="2" height="5" fill="#90a4ae"/><rect x="4" y="12" width="2" height="2" fill="#90a4ae"/><rect x="4" y="16" width="2" height="2" fill="#90a4ae"/><rect x="4" y="20" width="2" height="2" fill="#90a4ae"/><rect x="8" y="12" width="2" height="2" fill="#90a4ae"/><rect x="8" y="16" width="2" height="2" fill="#90a4ae"/><rect x="8" y="20" width="2" height="2" fill="#90a4ae"/><rect x="12" y="12" width="2" height="2" fill="#90a4ae"/><rect x="12" y="16" width="2" height="2" fill="#90a4ae"/><rect x="12" y="20" width="2" height="2" fill="#90a4ae"/><rect x="16" y="12" width="2" height="2" fill="#90a4ae"/><rect x="16" y="16" width="2" height="2" fill="#90a4ae"/><rect x="16" y="20" width="2" height="2" fill="#90a4ae"/><rect x="20" y="12" width="2" height="2" fill="#90a4ae"/><rect x="20" y="16" width="2" height="2" fill="#90a4ae"/><rect x="20" y="20" width="2" height="2" fill="#90a4ae"/></svg>
<div class="a t" style="left:1440.5px;top:162.02px;font-size:20.3px;color:#555;font-weight:normal;transform:scaleX(0.9639);transform-origin:0 0;">Schedule</div>
<div class="a" style="left:1547px;top:149px;width:199px;height:44px;background:#e2e3e5"></div>
<svg class="a" style="left:1564px;top:159px" width="24" height="24" viewBox="0 0 24 24"><rect x="0" y="8" width="7" height="8" fill="#e91e63"/><path d="M7 12 L11 12 M11 3 L11 21 M11 3 L17 3 M11 12 L17 12 M11 21 L17 21" stroke="#90caf9" stroke-width="2" fill="none"/><rect x="16" y="0" width="7" height="6" fill="#2196f3"/><rect x="16" y="9" width="7" height="6" fill="#2196f3"/><rect x="16" y="18" width="7" height="6" fill="#2196f3"/></svg>
<div class="a t" style="left:1599.5px;top:162.02px;font-size:20.3px;color:#555;font-weight:normal;transform:scaleX(0.9831);transform-origin:0 0;">Dependencies</div>
<div class="a" style="left:1752px;top:149px;width:206px;height:44px;background:#e2e3e5"></div>
<svg class="a" style="left:1771px;top:156px" width="22" height="29" viewBox="0 0 22 29"><rect x="1.2" y="3.5" width="19.6" height="24.3" rx="2" fill="#fff" stroke="#37474f" stroke-width="2.2"/><rect x="7" y="1" width="8" height="4" rx="1" fill="#78909c"/><rect x="5" y="11" width="2" height="2" fill="#2196f3"/><rect x="9" y="11" width="8" height="1.5" fill="#b0bec5"/><rect x="5" y="16" width="2" height="2" fill="#2196f3"/><rect x="9" y="16" width="8" height="1.5" fill="#2196f3"/></svg>
<div class="a t" style="left:1804.5px;top:162.02px;font-size:20.3px;color:#555;font-weight:normal;transform:scaleX(0.9720);transform-origin:0 0;">Notes &amp; Events</div>
<div class="a" style="left:1965px;top:149px;width:111px;height:44px;background:#e2e3e5"></div>
<svg class="a" style="left:1981px;top:160px" width="29" height="23" viewBox="0 0 29 23"><path d="M9 1 L22 12 L14 21 L1 10 L1 2 Z" fill="#ffb74d" transform="translate(4,1)"/><path d="M2 1 L10 1 L22 12 L14 21 L1 10 Z" fill="#ffcc80"/><circle cx="5" cy="5" r="1.7" fill="#fff"/></svg>
<div class="a t" style="left:2017.5px;top:162.02px;font-size:20.3px;color:#555;font-weight:normal;transform:scaleX(0.9422);transform-origin:0 0;">Tags</div>
<svg class="a" style="left:1047px;top:588px" width="600" height="450" viewBox="0 0 600 450">
<defs>
<linearGradient id="sky" gradientUnits="userSpaceOnUse" x1="0" y1="0" x2="0" y2="450"><stop offset="0" stop-color="#3570c6"/><stop offset="0.12" stop-color="#3d7bd2"/><stop offset="0.25" stop-color="#5599e6"/><stop offset="0.37" stop-color="#72adee"/><stop offset="0.46" stop-color="#98c4f0"/><stop offset="1" stop-color="#98c4f0"/></linearGradient>
<linearGradient id="sea" x1="0" y1="0" x2="0" y2="1"><stop offset="0" stop-color="#2f7aa6"/><stop offset="0.25" stop-color="#4b92ba"/><stop offset="0.6" stop-color="#68a5c0"/><stop offset="1" stop-color="#8aaeb8"/></linearGradient>
<linearGradient id="sand" x1="0" y1="0" x2="0" y2="1"><stop offset="0" stop-color="#b59c7c"/><stop offset="0.35" stop-color="#c0a682"/><stop offset="1" stop-color="#c9b08b"/></linearGradient>
<filter id="b6" x="-30%" y="-30%" width="160%" height="160%"><feGaussianBlur stdDeviation="6"/></filter>
<filter id="b3" x="-20%" y="-20%" width="140%" height="140%"><feGaussianBlur stdDeviation="3"/></filter>
<filter id="b15" x="-20%" y="-20%" width="140%" height="140%"><feGaussianBlur stdDeviation="1.5"/></filter>
<filter id="b1" x="-20%" y="-20%" width="140%" height="140%"><feGaussianBlur stdDeviation="0.9"/></filter>
<clipPath id="pc"><rect width="600" height="450"/></clipPath>
</defs>
<g clip-path="url(#pc)">
<rect width="600" height="450" fill="url(#sky)"/>
<ellipse cx="190" cy="165" rx="110" ry="22" fill="#9ccaf4" opacity="0.55" filter="url(#b6)"/>
<path d="M328 180 C370 170 430 171 480 168 C530 166 575 169 605 171 L605 203 L328 203 Z" fill="#e6eef6" filter="url(#b3)"/><ellipse cx="470" cy="190" rx="120" ry="9" fill="#ffffff" opacity="0.6" filter="url(#b3)"/><path d="M315 199 L450 200 L600 205 L600 211 L315 207 Z" fill="#3e5c66" filter="url(#b1)"/><rect x="0" y="206" width="600" height="244" fill="url(#sea)"/><path d="M180 242 C250 244 300 258 340 275 C400 300 470 322 540 340 C570 347 590 350 605 352 L605 415 C560 400 500 378 440 352 C380 325 330 300 290 282 C250 266 210 258 170 255 Z" fill="#8fb0c0" filter="url(#b6)"/><path d="M250 262 C320 280 380 305 440 330 C500 352 560 366 605 374 L605 410 C550 395 490 372 430 346 C370 320 320 298 260 275 Z" fill="#aca2a0" opacity="0.85" filter="url(#b6)"/><path d="M0 236 L260 238 C300 245 330 262 350 275 L330 290 L0 290 Z" fill="#aaa292" filter="url(#b6)"/><path d="M0 238 C80 242 170 248 230 258 C280 272 320 295 360 318 C420 350 500 385 560 402 C580 408 595 412 605 414 L605 455 L0 455 Z" fill="url(#sand)" filter="url(#b3)"/><ellipse cx="110" cy="330" rx="120" ry="45" fill="#b0977a" opacity="0.55" filter="url(#b6)"/><ellipse cx="420" cy="430" rx="170" ry="30" fill="#cfb691" opacity="0.6" filter="url(#b6)"/><rect x="345" y="222" width="200" height="5" fill="#9eb0b8" filter="url(#b1)"/><rect x="350" y="221" width="3" height="6" fill="#2f4048" filter="url(#b1)"/><rect x="368" y="221" width="3" height="6" fill="#2f4048" filter="url(#b1)"/><rect x="386" y="221" width="3" height="6" fill="#2f4048" filter="url(#b1)"/><rect x="404" y="221" width="3" height="6" fill="#2f4048" filter="url(#b1)"/><rect x="422" y="221" width="3" height="6" fill="#2f4048" filter="url(#b1)"/><rect x="440" y="221" width="3" height="6" fill="#2f4048" filter="url(#b1)"/><rect x="458" y="221" width="3" height="6" fill="#2f4048" filter="url(#b1)"/><rect x="476" y="221" width="3" height="6" fill="#2f4048" filter="url(#b1)"/><rect x="494" y="221" width="3" height="6" fill="#2f4048" filter="url(#b1)"/><rect x="512" y="221" width="3" height="6" fill="#2f4048" filter="url(#b1)"/><rect x="530" y="221" width="3" height="6" fill="#2f4048" filter="url(#b1)"/><path d="M520 220 L555 219 L560 226 L520 227 Z" fill="#2a3438" filter="url(#b1)"/><path d="M555 222 L605 222 L605 230 L575 229 Z" fill="#e3eaee" opacity="0.9" filter="url(#b1)"/><g filter="url(#b15)"><path d="M60 175 C100 165 140 170 180 172 C220 165 260 158 300 170 C325 185 340 205 350 222 L352 236 L260 240 L150 238 L60 240 Z" fill="#3d5b2b"/><path d="M90 200 C130 188 160 195 190 200 L185 232 L100 236 Z" fill="#5a7f36"/><path d="M240 178 C270 170 300 188 320 215 L300 232 L240 232 Z" fill="#4d7030"/><path d="M30 232 C100 224 200 220 290 222 C325 223 350 227 370 233 L345 243 L250 247 L140 247 L40 246 Z" fill="#5f4e40"/><path d="M160 228 L230 224 L255 238 L180 243 Z" fill="#7b6452" opacity="0.8"/><path d="M178 190 C185 168 195 148 205 138 C218 142 236 168 246 192 Z" fill="#a39682"/><path d="M184 190 L248 192 L250 214 L186 213 Z" fill="#d8d4c8"/><path d="M195 192 L199 192 L199 213 L195 213 Z M224 192 L228 192 L228 213 L224 213 Z" fill="#5a5a4a"/><path d="M158.4 160.3 L156.9 154.4 L151.7 154.5 L149.6 148.9 L144.2 150.7 L141.2 146.0 L136.2 149.0 L132.5 145.8 L128.3 149.5 L124.3 148.0 L120.8 151.7 L117.0 151.8 L114.0 155.2 L110.4 156.1 L107.3 158.6 L108.7 161.4 L112.3 160.8 L115.4 159.3 L119.1 160.7 L122.0 159.5 L125.3 162.5 L128.0 160.9 L130.5 165.0 L133.5 162.8 L135.2 167.4 L139.0 164.9 L140.3 169.4 L144.9 167.1 L146.4 171.2 L151.6 169.7 Z" fill="#3b6128" opacity="1.0"/><path d="M158.2 160.1 L157.4 154.8 L153.0 155.3 L152.0 150.0 L147.2 151.6 L145.9 146.9 L141.0 149.1 L139.1 145.3 L134.5 147.6 L132.2 144.9 L128.0 146.9 L125.3 145.2 L121.6 146.6 L118.8 145.4 L115.7 145.5 L114.9 148.6 L117.5 150.2 L120.3 150.7 L122.3 153.9 L125.3 154.3 L126.8 158.4 L130.1 158.1 L131.2 162.8 L135.0 161.7 L135.8 166.7 L140.1 164.9 L141.0 169.6 L145.7 167.6 L146.9 171.6 L151.8 169.9 Z" fill="#3b6128" opacity="1.0"/><path d="M159.4 161.2 L159.7 155.4 L154.9 154.3 L155.1 148.6 L149.8 148.4 L149.5 143.2 L143.9 143.5 L142.9 139.1 L137.6 139.6 L135.8 136.1 L131.0 136.5 L128.7 133.9 L124.6 133.9 L122.1 131.7 L118.9 130.7 L117.1 133.3 L119.2 135.9 L122.0 137.4 L123.2 141.2 L126.1 142.7 L126.6 147.4 L130.2 148.3 L130.1 153.5 L134.4 153.8 L134.1 159.2 L139.1 159.1 L139.0 164.3 L144.5 164.1 L145.0 168.7 L150.6 168.8 Z" fill="#3b6128" opacity="1.0"/><path d="M160.1 162.3 L161.9 157.0 L157.7 155.1 L159.5 149.9 L154.5 148.7 L155.7 143.8 L150.4 143.1 L150.8 138.8 L145.7 138.2 L145.2 134.7 L140.7 134.0 L139.4 131.2 L135.7 130.3 L134.2 127.8 L131.6 126.2 L129.2 128.2 L130.2 130.9 L132.2 132.9 L132.0 136.7 L134.2 138.6 L133.2 143.0 L136.2 144.6 L134.6 149.3 L138.6 150.5 L136.8 155.4 L141.5 156.4 L140.0 161.2 L145.2 162.1 L144.6 166.5 L149.9 167.7 Z" fill="#3b6128" opacity="1.0"/><path d="M160.6 163.5 L163.5 158.4 L159.8 155.3 L162.6 150.3 L158.0 147.6 L160.3 143.0 L155.3 140.6 L156.7 136.4 L151.8 134.2 L152.2 130.4 L148.0 128.3 L147.5 125.0 L144.2 122.9 L143.4 119.9 L141.5 117.4 L138.5 118.6 L138.7 121.7 L140.1 124.4 L138.9 128.1 L140.6 130.9 L138.5 135.1 L141.0 137.7 L138.3 142.2 L141.9 144.8 L139.0 149.4 L143.5 151.9 L141.0 156.5 L146.0 159.1 L144.4 163.7 L149.4 166.5 Z" fill="#3b6128" opacity="1.0"/><path d="M160.8 164.7 L164.7 160.7 L161.8 157.1 L165.7 153.3 L161.9 149.9 L165.2 146.2 L161.0 143.0 L163.4 139.5 L159.3 136.5 L160.7 133.2 L157.3 130.4 L157.7 127.3 L155.1 124.6 L155.3 121.7 L154.2 119.1 L151.1 119.3 L150.3 122.0 L150.8 124.8 L148.6 127.9 L149.4 130.8 L146.2 134.0 L148.0 137.1 L144.2 140.5 L147.0 143.7 L143.1 147.3 L146.8 150.6 L143.3 154.3 L147.5 157.8 L144.9 161.6 L149.2 165.3 Z" fill="#3b6128" opacity="1.0"/><path d="M160.7 166.0 L165.5 162.5 L163.5 158.0 L168.2 154.7 L165.3 150.2 L169.5 147.1 L166.2 142.7 L169.4 139.6 L166.3 135.3 L168.5 132.3 L166.0 128.3 L167.3 125.2 L165.7 121.5 L166.7 118.5 L166.5 115.4 L163.5 114.6 L161.8 117.4 L161.5 120.5 L158.4 123.2 L158.3 126.6 L154.3 129.2 L155.1 133.0 L150.6 135.8 L152.4 140.0 L147.7 143.0 L150.4 147.5 L146.1 150.7 L149.4 155.5 L146.0 159.1 L149.3 164.0 Z" fill="#3b6128" opacity="1.0"/><path d="M160.4 167.2 L165.6 165.4 L164.5 161.0 L169.6 159.4 L167.7 154.7 L172.3 153.1 L170.0 148.4 L173.8 146.6 L171.7 142.1 L174.5 140.1 L173.0 135.8 L175.0 133.5 L174.3 129.8 L176.0 127.6 L176.7 124.7 L174.0 123.1 L171.7 125.0 L170.5 127.7 L167.0 129.1 L166.0 132.1 L161.6 133.3 L161.5 136.9 L156.5 138.1 L157.4 142.3 L152.2 143.7 L153.9 148.4 L149.1 150.2 L151.3 155.3 L147.3 157.7 L149.6 162.8 Z" fill="#3b6128" opacity="1.0"/><path d="M159.7 168.4 L165.3 167.7 L165.4 163.0 L170.9 162.5 L170.3 157.4 L175.3 156.8 L174.4 151.5 L178.7 150.7 L178.0 145.5 L181.5 144.2 L181.4 139.5 L184.1 137.7 L184.8 133.8 L187.3 131.9 L189.0 129.2 L187.0 126.8 L184.0 128.2 L181.8 130.6 L177.8 131.1 L175.8 134.0 L171.0 134.1 L169.7 137.8 L164.3 137.9 L163.8 142.4 L158.3 142.6 L158.5 147.9 L153.2 148.6 L154.0 154.3 L149.4 155.9 L150.3 161.6 Z" fill="#3b6128" opacity="1.0"/><path d="M158.5 169.6 L163.5 171.0 L164.4 166.9 L169.2 168.5 L169.7 163.8 L174.0 165.2 L174.4 160.2 L178.2 161.1 L178.7 156.3 L182.0 156.4 L183.0 152.2 L185.8 151.6 L187.4 148.3 L190.1 147.6 L192.4 145.7 L191.3 142.7 L188.3 142.8 L185.8 144.2 L182.1 143.2 L179.6 145.0 L175.4 143.4 L173.4 146.2 L168.7 144.3 L167.2 148.2 L162.3 146.4 L161.4 151.2 L156.6 150.0 L156.1 155.3 L151.7 155.1 L151.5 160.4 Z" fill="#3b6128" opacity="1.0"/><path d="M158.5 169.6 L163.8 170.9 L165.1 166.8 L169.7 168.9 L170.8 164.4 L174.5 166.8 L175.9 162.1 L179.0 164.2 L181.1 160.0 L183.8 161.5 L186.7 158.4 L189.5 159.4 L193.0 157.7 L195.9 159.1 L199.4 159.4 L200.6 156.6 L197.7 154.3 L194.2 153.6 L191.2 150.4 L187.6 150.5 L184.1 147.0 L180.3 148.6 L176.0 145.2 L172.6 148.5 L167.6 145.7 L165.0 150.4 L159.6 148.9 L157.8 154.5 L152.7 154.5 L151.5 160.4 Z" fill="#3b6128" opacity="1.0"/><path d="M156.7 170.5 L159.6 174.0 L160.8 171.0 L162.7 175.0 L164.3 171.3 L165.6 174.9 L168.0 171.2 L169.1 174.2 L172.3 171.2 L173.6 173.6 L177.3 171.8 L179.2 173.7 L182.8 173.4 L184.9 175.6 L187.9 177.0 L190.1 174.7 L188.2 171.8 L185.5 170.0 L184.3 166.1 L181.3 165.0 L180.1 160.6 L176.6 160.7 L174.9 155.9 L171.1 157.6 L168.7 153.0 L165.1 156.2 L161.8 152.5 L158.9 156.8 L155.3 154.7 L153.3 159.5 Z" fill="#3b6128" opacity="1.0"/><path d="M153.8 170.7 L153.7 174.9 L155.8 172.8 L155.0 177.0 L158.3 174.7 L157.4 178.6 L161.7 176.9 L161.3 180.4 L166.0 179.8 L166.5 183.0 L171.0 183.7 L172.3 186.9 L176.3 188.8 L177.8 192.4 L180.6 195.7 L183.4 194.3 L182.3 190.1 L180.0 186.7 L180.1 182.1 L177.6 179.3 L178.2 174.4 L174.9 172.6 L175.7 167.5 L171.5 166.9 L171.8 161.7 L167.2 162.5 L166.6 157.7 L161.9 159.8 L160.1 156.2 L156.2 159.3 Z" fill="#3b6128" opacity="1.0"/><path d="M149.2 165.0 L145.1 165.8 L147.8 166.8 L143.8 167.9 L147.4 169.2 L143.9 170.7 L148.0 172.3 L145.4 174.1 L149.3 176.0 L147.7 178.1 L151.0 180.4 L150.4 182.8 L152.8 185.4 L152.5 188.1 L153.4 191.0 L156.6 191.0 L157.5 188.1 L157.2 185.4 L159.6 182.8 L159.0 180.4 L162.3 178.1 L160.7 176.0 L164.6 174.1 L162.0 172.3 L166.1 170.7 L162.6 169.2 L166.2 167.9 L162.2 166.8 L164.9 165.8 L160.8 165.0 Z" fill="#3b6128" opacity="1.0"/><path d="M154.4 159.2 L150.9 155.7 L148.8 159.1 L144.5 156.4 L143.5 161.1 L139.0 159.7 L139.0 164.9 L135.0 164.9 L135.5 169.9 L132.1 171.3 L132.6 175.9 L130.1 178.3 L130.0 182.5 L127.8 185.4 L126.6 189.2 L129.4 190.8 L132.1 188.1 L133.7 184.9 L137.5 183.6 L138.8 180.8 L143.2 180.8 L143.7 177.8 L148.0 179.0 L147.8 175.7 L151.7 178.0 L151.1 174.2 L153.9 176.9 L153.5 172.7 L155.2 175.0 L155.6 170.8 Z" fill="#3b6128" opacity="1.0"/><path d="M156.0 163.6 L153.2 161.4 L150.3 159.5 L147.4 158.0 L144.4 156.7 L141.3 155.8 L138.3 155.2 L135.2 154.9 L132.2 155.0 L129.2 155.3 L126.3 155.9 L123.4 156.7 L120.6 157.8 L117.7 159.0 L114.8 160.3 L115.3 161.2 L118.1 159.9 L121.0 159.0 L123.8 158.5 L126.6 158.2 L129.4 158.2 L132.1 158.4 L134.8 158.8 L137.5 159.3 L140.1 160.1 L142.8 161.0 L145.5 162.1 L148.3 163.3 L151.1 164.8 L154.0 166.4 Z" fill="#6f9a45" opacity="0.8"/><path d="M156.7 164.5 L156.0 161.1 L155.2 157.8 L154.4 154.5 L153.5 151.4 L152.6 148.4 L151.5 145.4 L150.5 142.6 L149.3 139.8 L148.2 137.1 L147.0 134.5 L145.8 132.0 L144.7 129.6 L143.6 127.2 L142.7 124.9 L141.8 125.2 L142.7 127.6 L143.5 130.1 L144.1 132.6 L144.8 135.3 L145.4 138.0 L146.1 140.9 L146.8 143.7 L147.5 146.7 L148.3 149.6 L149.2 152.7 L150.1 155.8 L151.1 159.0 L152.2 162.2 L153.3 165.5 Z" fill="#6f9a45" opacity="0.8"/><path d="M156.4 166.0 L158.6 163.4 L160.7 160.9 L162.8 158.4 L164.8 155.9 L166.7 153.4 L168.6 151.0 L170.5 148.7 L172.3 146.3 L174.1 144.0 L175.9 141.8 L177.7 139.7 L179.5 137.6 L181.4 135.7 L183.4 133.9 L182.7 133.2 L180.7 134.9 L178.6 136.6 L176.4 138.4 L174.2 140.2 L172.0 142.0 L169.8 144.0 L167.6 146.1 L165.4 148.3 L163.3 150.6 L161.2 153.0 L159.2 155.6 L157.3 158.3 L155.4 161.1 L153.6 164.0 Z" fill="#6f9a45" opacity="0.8"/><path d="M154.6 166.7 L156.0 167.3 L157.4 168.1 L158.8 168.9 L160.2 169.9 L161.8 171.1 L163.4 172.4 L165.0 173.9 L166.8 175.6 L168.6 177.5 L170.4 179.7 L172.3 182.0 L174.1 184.7 L175.9 187.6 L177.5 190.7 L178.4 190.3 L176.8 187.1 L175.2 184.0 L173.8 181.1 L172.4 178.4 L170.9 175.8 L169.4 173.5 L167.9 171.3 L166.3 169.4 L164.6 167.7 L162.9 166.2 L161.1 165.1 L159.2 164.2 L157.3 163.6 L155.4 163.3 Z" fill="#6f9a45" opacity="0.8"/><path d="M287.1 169.6 L285.1 164.4 L280.6 165.7 L278.3 160.7 L273.7 163.1 L271.1 158.7 L266.5 161.8 L263.5 158.4 L259.2 161.6 L255.9 159.4 L252.0 162.2 L248.6 161.1 L244.9 163.2 L241.5 162.6 L238.0 163.4 L238.0 166.6 L241.2 167.7 L244.5 167.5 L247.6 170.2 L250.9 170.0 L253.6 173.8 L257.1 172.8 L259.5 177.3 L263.2 175.4 L265.4 180.2 L269.5 177.6 L271.5 182.1 L276.0 179.3 L278.2 183.0 L282.9 180.4 Z" fill="#355528" opacity="1.0"/><path d="M288.5 170.4 L288.0 164.9 L283.6 165.1 L282.9 159.8 L278.0 160.9 L276.9 156.1 L271.9 157.9 L270.3 153.9 L265.5 155.9 L263.3 153.0 L259.0 154.6 L256.4 152.8 L252.6 153.8 L249.9 152.4 L246.8 152.2 L245.7 155.2 L248.1 157.1 L251.0 157.8 L252.7 161.2 L255.7 161.8 L256.9 166.0 L260.2 165.9 L261.0 170.8 L264.9 170.0 L265.4 175.1 L269.9 173.7 L270.5 178.5 L275.4 176.9 L276.4 181.0 L281.5 179.6 Z" fill="#355528" opacity="1.0"/><path d="M289.5 171.4 L290.2 165.6 L285.5 164.3 L286.0 158.6 L280.6 158.1 L280.6 152.9 L275.0 153.0 L274.3 148.5 L268.9 148.7 L267.4 145.1 L262.6 145.2 L260.5 142.5 L256.4 142.2 L254.1 139.9 L250.9 138.7 L249.1 141.3 L250.9 143.9 L253.6 145.6 L254.5 149.5 L257.4 151.1 L257.6 155.8 L261.1 156.9 L260.7 162.1 L265.0 162.7 L264.4 168.0 L269.4 168.2 L269.0 173.4 L274.5 173.5 L274.8 178.2 L280.5 178.6 Z" fill="#355528" opacity="1.0"/><path d="M290.3 172.6 L292.5 167.5 L288.4 165.4 L290.5 160.4 L285.7 158.9 L287.2 154.2 L282.1 153.2 L282.8 149.0 L277.8 148.1 L277.6 144.6 L273.2 143.7 L272.2 140.8 L268.6 139.6 L267.4 137.1 L265.0 135.4 L262.4 137.1 L263.1 139.9 L264.9 142.0 L264.4 145.6 L266.4 147.7 L265.0 151.9 L267.9 153.7 L265.9 158.3 L269.7 159.7 L267.6 164.4 L272.2 165.7 L270.4 170.3 L275.5 171.6 L274.5 175.9 L279.7 177.4 Z" fill="#355528" opacity="1.0"/><path d="M290.7 174.0 L294.0 169.3 L290.6 165.9 L293.9 161.3 L289.6 158.3 L292.3 154.0 L287.6 151.3 L289.4 147.3 L284.8 144.8 L285.7 141.2 L281.7 138.8 L281.6 135.6 L278.5 133.1 L278.2 130.2 L276.5 127.6 L273.5 128.4 L273.3 131.4 L274.3 134.2 L272.7 137.7 L274.0 140.6 L271.5 144.4 L273.7 147.2 L270.6 151.3 L273.9 154.2 L270.6 158.4 L274.7 161.3 L271.8 165.6 L276.5 168.6 L274.5 172.9 L279.3 176.0 Z" fill="#355528" opacity="1.0"/><path d="M290.8 175.3 L295.1 171.8 L292.5 168.2 L296.7 164.9 L293.2 161.4 L296.9 158.2 L293.0 154.8 L295.8 151.8 L292.0 148.6 L293.8 145.7 L290.6 142.6 L291.4 139.8 L289.2 136.9 L289.7 134.3 L288.9 131.6 L285.8 131.4 L284.7 134.0 L284.9 136.6 L282.3 139.2 L282.7 142.1 L279.3 144.8 L280.7 147.9 L276.6 150.8 L279.0 154.1 L274.8 157.1 L278.1 160.6 L274.3 163.8 L278.2 167.5 L275.3 170.9 L279.2 174.7 Z" fill="#355528" opacity="1.0"/><path d="M290.6 176.6 L295.6 173.9 L294.0 169.5 L299.0 167.2 L296.5 162.6 L300.9 160.3 L298.1 155.8 L301.6 153.4 L298.9 149.0 L301.5 146.5 L299.4 142.5 L301.1 139.8 L299.9 136.2 L301.3 133.6 L301.5 130.6 L298.5 129.4 L296.6 131.7 L295.8 134.6 L292.5 136.6 L292.0 139.8 L287.8 141.7 L288.2 145.4 L283.4 147.3 L284.8 151.5 L279.8 153.6 L282.1 158.2 L277.5 160.7 L280.3 165.5 L276.5 168.5 L279.4 173.4 Z" fill="#355528" opacity="1.0"/><path d="M290.0 178.0 L295.2 177.4 L294.5 173.2 L299.7 172.8 L298.3 168.3 L302.9 167.8 L301.2 163.1 L305.0 162.3 L303.5 157.7 L306.5 156.6 L305.6 152.4 L307.8 150.7 L307.7 147.2 L309.7 145.5 L310.7 143.0 L308.4 140.8 L306.0 142.1 L304.4 144.3 L300.8 144.8 L299.5 147.4 L295.1 147.5 L294.5 150.8 L289.6 150.9 L289.9 154.9 L284.7 155.1 L285.8 159.8 L280.9 160.5 L282.5 165.5 L278.3 166.9 L280.0 172.0 Z" fill="#355528" opacity="1.0"/><path d="M288.9 179.3 L294.1 180.2 L294.9 176.0 L299.9 177.1 L300.2 172.2 L304.8 173.1 L304.9 168.0 L308.9 168.5 L309.2 163.5 L312.6 163.3 L313.4 158.9 L316.3 158.0 L317.7 154.5 L320.5 153.5 L322.7 151.4 L321.3 148.6 L318.2 149.0 L315.7 150.7 L311.9 150.0 L309.4 152.1 L305.0 150.9 L303.1 154.0 L298.1 152.5 L296.8 156.6 L291.6 155.3 L291.0 160.2 L285.9 159.5 L285.7 164.9 L281.2 165.2 L281.1 170.7 Z" fill="#355528" opacity="1.0"/><path d="M288.6 179.6 L293.7 180.9 L294.8 177.0 L299.3 179.1 L300.1 174.6 L303.8 177.0 L304.9 172.4 L307.8 174.5 L309.8 170.3 L312.3 171.8 L315.0 168.6 L317.6 169.6 L320.9 167.9 L323.6 169.1 L326.9 169.4 L328.2 166.5 L325.3 164.3 L322.0 163.7 L319.2 160.6 L315.7 160.7 L312.4 157.2 L308.8 158.9 L304.7 155.5 L301.5 158.8 L296.6 156.0 L294.2 160.7 L289.0 159.1 L287.4 164.7 L282.4 164.6 L281.4 170.4 Z" fill="#355528" opacity="1.0"/><path d="M287.3 180.3 L291.9 183.0 L294.3 179.4 L298.1 182.8 L300.7 178.8 L303.8 182.2 L307.0 178.3 L309.7 181.4 L313.8 178.3 L316.6 180.8 L321.2 179.1 L324.5 181.4 L329.3 181.5 L332.7 184.2 L337.0 186.2 L339.0 183.8 L335.7 180.1 L331.6 177.8 L328.8 173.4 L324.5 171.9 L321.6 167.2 L316.8 167.3 L313.3 162.5 L308.4 164.4 L304.1 160.1 L299.6 163.7 L294.6 160.6 L290.8 165.5 L285.6 164.2 L282.7 169.7 Z" fill="#355528" opacity="1.0"/><path d="M285.8 180.7 L288.2 184.6 L290.0 181.9 L291.5 186.1 L294.0 182.9 L294.9 186.8 L298.4 183.8 L299.3 187.2 L303.6 185.1 L305.0 188.0 L309.5 187.3 L311.6 190.0 L315.8 190.8 L318.2 193.8 L321.6 196.3 L324.0 194.3 L322.0 190.5 L319.0 187.7 L317.8 183.3 L314.5 181.2 L313.6 176.3 L309.6 175.5 L308.5 170.2 L304.0 171.0 L302.1 165.9 L297.6 168.2 L294.7 163.9 L290.8 167.6 L287.2 164.8 L284.2 169.3 Z" fill="#355528" opacity="1.0"/><path d="M283.5 180.6 L283.2 184.8 L285.4 182.9 L284.5 187.1 L287.9 185.1 L287.0 188.9 L291.4 187.6 L291.1 191.2 L295.9 191.0 L296.3 194.4 L300.9 195.4 L302.2 198.9 L306.2 201.2 L307.8 205.1 L310.6 208.7 L313.4 207.3 L312.3 202.8 L310.1 199.1 L310.2 194.4 L307.7 191.3 L308.4 186.3 L305.0 184.2 L305.9 179.0 L301.7 178.1 L302.3 172.9 L297.5 173.3 L297.1 168.5 L292.3 170.3 L290.7 166.5 L286.5 169.4 Z" fill="#355528" opacity="1.0"/><path d="M279.4 173.6 L275.1 174.0 L277.5 175.9 L273.3 176.7 L276.7 178.9 L273.0 180.2 L276.8 182.6 L274.0 184.5 L277.7 187.1 L275.9 189.4 L279.0 192.3 L278.2 195.0 L280.4 198.2 L279.8 201.3 L280.6 204.7 L283.7 204.9 L284.9 201.6 L284.7 198.5 L287.3 195.7 L286.9 192.9 L290.4 190.6 L289.0 188.1 L293.2 186.3 L290.7 184.1 L295.0 182.8 L291.7 180.8 L295.5 180.0 L291.7 178.2 L294.5 177.9 L290.6 176.4 Z" fill="#355528" opacity="1.0"/><path d="M284.4 169.2 L280.6 165.7 L278.0 169.2 L273.4 166.7 L271.9 171.5 L267.0 170.4 L266.5 175.8 L262.0 176.2 L262.1 181.6 L258.3 183.3 L258.3 188.5 L255.4 191.4 L254.9 196.2 L252.2 199.7 L250.6 204.2 L253.4 205.8 L256.5 202.4 L258.5 198.7 L262.8 196.8 L264.5 193.4 L269.3 192.9 L270.2 189.6 L275.0 190.4 L275.2 186.8 L279.4 188.7 L279.3 184.7 L282.5 187.2 L282.5 182.8 L284.7 185.1 L285.6 180.8 Z" fill="#355528" opacity="1.0"/><path d="M285.6 173.4 L282.8 172.0 L280.0 170.9 L277.1 169.8 L274.2 168.9 L271.3 168.1 L268.4 167.5 L265.4 167.0 L262.5 166.7 L259.5 166.4 L256.6 166.3 L253.7 166.2 L250.8 166.2 L247.9 166.1 L245.1 166.0 L245.0 167.0 L247.9 167.1 L250.7 167.5 L253.5 168.0 L256.3 168.6 L259.1 169.3 L261.9 170.0 L264.6 170.8 L267.4 171.6 L270.2 172.4 L273.0 173.2 L275.8 174.1 L278.6 174.9 L281.5 175.8 L284.4 176.6 Z" fill="#628c3c" opacity="0.8"/><path d="M286.7 174.7 L286.3 171.3 L285.9 168.0 L285.4 164.8 L284.8 161.6 L284.1 158.6 L283.4 155.7 L282.6 152.8 L281.8 150.0 L281.0 147.3 L280.1 144.7 L279.2 142.2 L278.3 139.7 L277.6 137.3 L277.0 134.9 L276.0 135.2 L276.6 137.5 L277.1 140.0 L277.4 142.6 L277.8 145.2 L278.1 147.9 L278.5 150.7 L278.9 153.6 L279.3 156.5 L279.8 159.5 L280.3 162.5 L281.0 165.6 L281.7 168.8 L282.4 172.0 L283.3 175.3 Z" fill="#628c3c" opacity="0.8"/><path d="M286.2 176.3 L288.5 174.5 L290.9 172.8 L293.1 171.1 L295.4 169.3 L297.5 167.6 L299.7 165.9 L301.8 164.3 L303.9 162.6 L306.0 161.0 L308.1 159.5 L310.2 158.0 L312.3 156.5 L314.4 155.3 L316.6 154.2 L316.3 153.3 L314.0 154.4 L311.7 155.4 L309.3 156.4 L306.9 157.4 L304.5 158.5 L302.0 159.8 L299.6 161.1 L297.3 162.5 L294.9 164.1 L292.6 165.7 L290.3 167.5 L288.1 169.5 L286.0 171.5 L283.8 173.7 Z" fill="#628c3c" opacity="0.8"/><path d="M284.5 176.7 L285.9 177.4 L287.2 178.2 L288.7 179.2 L290.1 180.3 L291.7 181.6 L293.3 183.1 L295.0 184.8 L296.7 186.7 L298.5 188.8 L300.4 191.2 L302.2 193.8 L304.1 196.7 L305.9 199.8 L307.5 203.2 L308.4 202.9 L306.8 199.4 L305.2 196.1 L303.8 192.9 L302.4 190.0 L301.0 187.2 L299.5 184.7 L298.0 182.4 L296.4 180.3 L294.7 178.4 L293.0 176.8 L291.2 175.5 L289.3 174.5 L287.4 173.7 L285.5 173.3 Z" fill="#628c3c" opacity="0.8"/><path d="M171.1 202.0 L168.8 198.7 L165.2 199.1 L162.8 196.0 L159.2 197.1 L156.6 194.3 L153.0 195.7 L150.2 193.5 L146.7 194.9 L143.8 193.4 L140.4 194.6 L137.4 193.8 L134.2 194.6 L131.2 194.0 L128.1 194.1 L127.9 195.9 L130.8 196.8 L133.8 197.0 L136.6 198.8 L139.6 199.0 L142.2 201.3 L145.3 201.1 L147.8 203.9 L151.0 203.2 L153.4 206.2 L156.8 205.1 L159.2 208.0 L162.8 206.7 L165.2 209.1 L168.9 208.0 Z" fill="#78a04a" opacity="1.0"/><path d="M172.5 202.9 L172.4 199.3 L169.4 198.3 L169.3 194.7 L165.9 194.1 L165.5 190.8 L162.1 190.5 L161.3 187.7 L157.9 187.4 L156.7 185.0 L153.6 184.7 L152.1 182.8 L149.4 182.1 L147.7 180.4 L145.6 179.3 L144.4 180.7 L145.9 182.6 L147.8 184.0 L148.7 186.5 L150.6 187.9 L151.1 190.9 L153.5 191.9 L153.7 195.2 L156.5 196.0 L156.6 199.3 L159.8 199.9 L160.0 203.1 L163.5 203.6 L164.1 206.6 L167.5 207.1 Z" fill="#78a04a" opacity="1.0"/><path d="M172.5 207.1 L175.9 206.6 L176.5 203.6 L180.0 203.1 L180.2 199.9 L183.4 199.3 L183.5 196.0 L186.3 195.2 L186.5 191.9 L188.9 190.9 L189.4 187.9 L191.3 186.5 L192.2 184.0 L194.1 182.6 L195.6 180.7 L194.4 179.3 L192.3 180.4 L190.6 182.1 L187.9 182.8 L186.4 184.7 L183.3 185.0 L182.1 187.4 L178.7 187.7 L177.9 190.5 L174.5 190.8 L174.1 194.1 L170.7 194.7 L170.6 198.3 L167.6 199.3 L167.5 202.9 Z" fill="#78a04a" opacity="1.0"/><path d="M171.6 207.8 L175.5 208.3 L177.7 205.5 L181.3 206.4 L183.4 203.5 L186.7 204.5 L188.9 201.6 L191.9 202.5 L194.3 200.0 L197.2 200.6 L200.0 198.7 L202.8 199.2 L205.9 198.1 L208.7 198.8 L211.8 198.9 L212.2 197.1 L209.3 196.0 L206.1 195.7 L203.2 194.1 L200.0 194.3 L196.8 192.6 L193.7 193.7 L190.1 192.0 L187.1 194.0 L183.3 192.7 L180.6 195.5 L176.7 194.8 L174.3 198.3 L170.5 198.5 L168.4 202.2 Z" fill="#78a04a" opacity="1.0"/><path d="M178 140 C177 120 174 95 168 32" stroke="#2f3329" stroke-width="4.5" fill="none"/><path d="M171.3 21.6 L168.4 13.6 L161.6 15.7 L158.3 8.0 L151.3 11.8 L147.4 5.0 L140.5 9.8 L136.1 4.6 L129.6 9.6 L124.8 6.2 L118.8 10.6 L113.8 9.0 L108.3 12.2 L103.2 11.3 L98.1 12.6 L97.9 17.4 L102.8 19.1 L107.7 18.9 L112.2 23.1 L117.2 22.8 L121.2 28.6 L126.4 27.0 L129.9 33.9 L135.5 31.0 L138.6 38.3 L144.7 34.4 L147.7 41.3 L154.4 36.8 L157.6 42.5 L164.7 38.4 Z" fill="#34492b" opacity="1.0"/><path d="M172.0 21.9 L169.2 13.7 L162.2 15.6 L158.2 8.0 L151.4 12.5 L146.1 6.4 L140.2 12.7 L134.2 9.0 L129.6 15.9 L123.6 14.8 L120.0 21.4 L114.6 22.6 L111.3 28.4 L106.2 30.7 L102.3 35.1 L105.2 39.1 L110.4 37.3 L114.5 34.3 L120.5 35.5 L124.2 32.9 L129.8 36.5 L133.0 33.2 L137.5 38.7 L140.7 34.4 L144.0 40.8 L147.9 35.7 L150.2 42.0 L155.4 36.9 L157.6 42.2 L164.0 38.1 Z" fill="#34492b" opacity="1.0"/><path d="M169.8 21.2 L165.0 13.9 L158.8 17.8 L152.5 11.7 L147.1 18.1 L140.0 14.1 L136.0 22.0 L128.8 20.5 L126.0 28.7 L119.5 29.8 L117.2 37.6 L111.6 40.8 L109.1 47.9 L103.9 52.2 L100.2 58.4 L103.8 61.6 L109.5 57.7 L113.7 52.9 L120.7 51.7 L124.5 47.5 L131.7 48.8 L134.5 44.2 L141.2 47.8 L143.4 42.4 L148.9 47.4 L151.1 41.3 L155.2 46.5 L158.4 40.1 L161.6 44.6 L166.2 38.8 Z" fill="#34492b" opacity="1.0"/><path d="M167.9 21.0 L162.2 15.0 L157.6 20.1 L150.6 15.6 L147.5 22.9 L140.0 20.6 L138.5 29.0 L131.4 29.0 L130.8 37.5 L124.8 39.8 L124.3 47.7 L119.5 51.9 L118.3 59.3 L113.9 64.5 L111.1 71.2 L115.2 73.9 L120.3 69.0 L123.7 63.4 L130.4 60.9 L133.4 56.0 L140.7 55.8 L142.5 50.7 L149.8 52.7 L150.6 47.1 L156.8 50.7 L157.2 44.4 L161.9 48.6 L162.7 41.8 L166.0 45.6 L168.1 39.0 Z" fill="#34492b" opacity="1.0"/><path d="M165.7 21.3 L158.7 16.9 L155.6 23.0 L147.6 20.4 L146.4 28.4 L138.4 28.1 L138.6 36.8 L131.5 38.7 L132.4 47.5 L126.5 51.4 L127.1 60.0 L122.6 65.7 L122.2 74.1 L118.0 80.8 L115.8 89.0 L120.2 91.0 L125.1 84.4 L128.1 77.3 L134.9 72.8 L137.5 66.6 L145.2 64.2 L146.5 58.1 L154.5 57.9 L154.5 51.7 L161.9 53.3 L161.1 46.8 L167.0 49.5 L166.1 42.7 L170.1 45.5 L170.3 38.7 Z" fill="#34492b" opacity="1.0"/><path d="M163.6 22.1 L156.4 19.2 L155.4 25.5 L147.5 24.4 L148.5 31.9 L141.1 32.8 L143.4 40.8 L137.0 43.6 L139.6 51.7 L134.7 56.1 L136.7 64.1 L133.2 70.1 L134.1 78.1 L130.9 85.0 L129.8 93.0 L134.4 94.6 L138.4 87.6 L140.4 80.5 L146.4 75.4 L148.0 69.1 L155.2 65.7 L155.3 59.7 L163.1 58.3 L161.8 52.3 L169.3 52.6 L166.9 46.6 L173.1 48.2 L170.3 42.0 L174.5 44.1 L172.4 37.9 Z" fill="#34492b" opacity="1.0"/><path d="M161.5 23.8 L153.9 22.9 L154.9 28.9 L147.1 29.7 L150.0 36.7 L142.8 39.1 L146.7 46.6 L140.9 50.7 L144.7 58.5 L140.4 64.1 L143.5 72.2 L140.7 79.2 L142.4 87.7 L140.0 95.6 L139.6 104.5 L144.4 105.5 L147.7 97.3 L149.0 89.2 L154.5 82.7 L155.4 75.5 L162.1 70.5 L161.6 63.9 L169.1 60.5 L167.0 54.4 L174.6 52.6 L171.2 46.8 L177.8 46.4 L173.7 40.9 L178.4 41.5 L174.5 36.2 Z" fill="#34492b" opacity="1.0"/><path d="M159.5 26.9 L152.5 27.8 L155.7 32.2 L148.7 34.4 L153.5 39.5 L147.3 42.8 L152.8 48.6 L148.0 53.1 L153.3 59.4 L150.1 65.0 L154.5 72.0 L152.8 78.7 L155.7 86.3 L154.4 93.9 L155.2 102.1 L160.0 102.5 L162.3 94.6 L162.5 86.9 L166.9 80.2 L166.7 73.4 L172.5 67.8 L170.8 61.7 L177.6 57.3 L174.3 51.9 L181.3 48.7 L176.6 44.0 L182.8 41.9 L177.3 37.7 L182.0 36.7 L176.5 33.1 Z" fill="#34492b" opacity="1.0"/><path d="M159.0 31.2 L153.0 34.1 L157.5 36.4 L151.4 40.2 L157.4 43.5 L152.2 48.2 L158.8 52.6 L155.0 58.1 L161.5 63.5 L159.3 69.9 L164.7 76.4 L164.0 83.7 L168.0 91.2 L167.8 99.5 L169.6 108.1 L174.4 107.9 L175.6 99.2 L174.8 91.0 L178.2 83.1 L177.0 75.9 L181.9 68.9 L179.1 62.7 L185.0 56.5 L180.6 51.3 L186.6 46.0 L180.9 41.9 L186.3 37.5 L179.7 34.4 L183.6 30.8 L177.0 28.8 Z" fill="#34492b" opacity="1.0"/><path d="M160.4 34.8 L155.5 39.2 L160.2 39.2 L155.3 43.9 L161.7 44.9 L157.5 49.9 L164.8 52.2 L162.0 57.7 L169.1 61.3 L167.9 67.3 L174.1 72.3 L174.4 78.9 L179.2 85.2 L179.9 92.7 L182.6 100.3 L187.4 99.6 L187.7 91.5 L185.9 84.1 L188.4 76.4 L186.2 70.0 L190.0 62.8 L186.4 57.5 L191.1 50.6 L185.8 46.6 L190.6 40.2 L184.0 37.5 L188.0 31.6 L180.7 30.3 L182.9 25.1 L175.6 25.2 Z" fill="#34492b" opacity="1.0"/><path d="M162.6 37.2 L159.7 43.1 L164.1 41.6 L160.8 47.6 L167.2 46.9 L164.4 52.9 L172.0 53.6 L170.4 59.7 L178.1 62.1 L178.0 68.5 L185.1 72.6 L186.4 79.5 L192.2 85.3 L193.9 93.0 L197.6 100.7 L202.4 99.3 L201.5 90.8 L198.7 83.3 L199.9 75.0 L196.7 68.5 L199.1 60.3 L194.4 55.3 L197.6 47.2 L191.4 43.8 L194.5 35.9 L187.1 34.3 L189.0 26.9 L181.0 27.0 L180.9 20.8 L173.4 22.8 Z" fill="#34492b" opacity="1.0"/><path d="M165.3 38.6 L164.7 45.2 L168.3 42.3 L166.7 48.8 L172.3 46.0 L170.8 52.1 L177.8 50.3 L177.2 56.0 L184.8 56.0 L185.5 61.5 L192.7 63.5 L194.8 69.1 L201.0 73.0 L203.5 79.4 L207.8 85.3 L212.3 83.4 L210.6 76.1 L207.1 70.0 L207.3 62.4 L203.3 57.3 L204.6 49.4 L199.3 45.9 L200.9 37.7 L194.2 36.1 L195.3 27.8 L187.7 28.2 L187.3 20.6 L179.7 23.1 L177.3 17.1 L170.7 21.4 Z" fill="#34492b" opacity="1.0"/><path d="M167.8 39.0 L170.0 45.6 L173.5 41.9 L174.4 48.8 L179.4 44.6 L179.8 51.0 L186.3 47.6 L187.2 53.4 L194.7 51.6 L196.6 56.9 L204.1 57.4 L207.3 62.5 L214.1 65.3 L217.7 71.1 L222.9 76.3 L227.1 73.7 L224.2 66.7 L219.6 61.2 L218.3 53.5 L213.3 49.1 L212.7 41.0 L206.5 38.5 L205.8 29.9 L198.6 29.6 L196.9 21.1 L189.2 23.3 L186.0 15.8 L178.8 20.3 L174.1 15.1 L168.2 21.0 Z" fill="#34492b" opacity="1.0"/><path d="M170.3 38.7 L175.0 44.2 L177.7 39.6 L181.0 45.9 L184.4 40.3 L186.8 46.2 L191.5 40.8 L193.6 45.9 L199.6 41.8 L202.2 45.9 L208.8 43.9 L212.4 47.6 L218.9 48.0 L222.8 52.2 L228.1 55.3 L231.7 51.9 L228.2 46.4 L223.2 42.8 L220.9 36.2 L215.6 33.6 L213.4 26.2 L207.2 25.8 L204.3 17.9 L197.6 19.9 L193.5 12.4 L186.9 16.9 L181.5 10.9 L176.0 17.4 L169.9 13.9 L165.7 21.3 Z" fill="#34492b" opacity="1.0"/><path d="M172.3 38.0 L179.6 41.5 L182.4 35.8 L188.5 40.4 L191.3 33.9 L196.2 38.7 L199.9 32.1 L204.0 36.3 L208.9 30.7 L212.9 34.0 L219.0 30.3 L223.4 33.0 L229.9 31.9 L234.7 35.1 L240.6 37.0 L243.4 33.0 L238.7 28.3 L232.9 25.8 L228.8 19.9 L222.8 18.6 L218.2 12.0 L211.6 13.2 L206.0 6.4 L199.5 10.4 L192.6 4.4 L186.9 10.8 L179.2 6.7 L174.8 14.8 L167.0 13.3 L163.7 22.0 Z" fill="#34492b" opacity="1.0"/><path d="M171.2 38.4 L177.4 42.9 L180.0 37.6 L185.8 42.4 L188.2 35.7 L193.5 40.0 L195.9 32.9 L200.7 36.0 L203.5 29.3 L207.9 31.1 L211.3 25.4 L215.4 26.0 L219.3 21.9 L223.4 22.2 L227.6 20.6 L227.5 15.7 L223.1 14.4 L218.8 15.2 L214.1 11.8 L209.8 13.2 L204.6 8.7 L200.5 11.9 L194.9 6.7 L191.1 11.6 L185.1 6.5 L181.9 13.1 L175.7 8.9 L173.0 16.4 L167.1 13.9 L164.8 21.6 Z" fill="#34492b" opacity="1.0"/><path d="M173.6 37.1 L181.0 39.4 L182.0 33.4 L189.1 36.1 L189.4 29.0 L195.8 31.4 L195.9 23.8 L201.5 25.3 L202.0 18.0 L206.6 18.3 L207.8 11.9 L211.8 11.1 L213.9 6.1 L217.7 5.1 L220.8 2.3 L219.2 -2.3 L214.8 -2.2 L211.2 -0.1 L205.9 -1.9 L202.4 0.8 L196.2 -1.8 L193.5 2.5 L186.5 -0.7 L184.6 5.2 L177.3 2.3 L176.3 9.4 L169.2 7.4 L168.9 15.4 L162.4 14.8 L162.4 22.9 Z" fill="#34492b" opacity="1.0"/><path d="M176.0 34.2 L183.0 34.6 L180.7 30.0 L187.6 30.7 L184.1 25.4 L190.1 25.9 L186.1 20.3 L191.0 20.3 L187.2 14.9 L190.7 14.2 L187.9 9.2 L190.1 7.8 L188.5 3.7 L190.4 2.2 L190.7 -0.6 L186.9 -3.7 L184.2 -2.7 L183.1 -0.4 L178.6 -0.6 L177.8 2.1 L172.1 1.3 L172.5 5.0 L165.8 4.1 L167.7 8.8 L160.7 8.0 L163.8 13.4 L157.3 13.2 L161.2 19.1 L156.0 19.9 L160.0 25.8 Z" fill="#34492b" opacity="1.0"/><path d="M176.9 28.4 L182.6 24.1 L177.8 21.7 L183.5 17.4 L177.3 15.5 L182.1 11.4 L175.2 9.8 L178.6 6.2 L172.1 4.7 L173.9 1.5 L168.3 0.1 L168.6 -2.7 L164.4 -4.2 L164.4 -6.7 L162.4 -8.6 L157.6 -7.4 L156.8 -4.8 L157.9 -2.6 L154.8 0.6 L156.3 2.8 L151.8 6.4 L154.8 8.4 L149.4 12.3 L153.9 14.2 L148.2 18.2 L154.2 20.0 L149.1 24.0 L155.9 25.8 L152.3 29.6 L159.1 31.6 Z" fill="#34492b" opacity="1.0"/><path d="M175.5 25.0 L178.8 18.5 L173.3 18.1 L176.5 11.6 L169.9 12.2 L172.2 6.3 L165.2 7.6 L166.3 2.5 L159.6 4.1 L159.5 0.1 L153.6 1.4 L152.4 -1.4 L147.7 -0.8 L146.2 -3.2 L143.2 -3.9 L139.9 -0.3 L140.7 2.5 L142.9 3.9 L142.1 8.4 L144.6 9.7 L142.5 15.1 L146.1 15.5 L143.2 21.6 L148.1 21.2 L144.9 27.3 L151.0 26.3 L148.2 32.1 L155.1 30.9 L153.4 35.9 L160.5 35.0 Z" fill="#34492b" opacity="1.0"/><path d="M173.8 23.1 L174.2 15.2 L168.0 15.7 L168.2 7.8 L161.1 9.8 L160.6 2.7 L153.4 5.5 L151.9 -0.2 L145.1 2.8 L142.7 -1.5 L136.6 1.1 L133.5 -1.6 L128.3 -0.0 L125.0 -2.1 L120.9 -2.3 L119.1 2.3 L121.8 5.1 L125.4 6.1 L127.1 11.1 L130.8 11.9 L131.6 18.2 L136.1 18.0 L136.1 25.1 L141.5 23.8 L141.1 31.2 L147.4 28.9 L147.3 35.9 L154.3 33.3 L154.9 39.2 L162.2 36.9 Z" fill="#34492b" opacity="1.0"/><path d="M169.0 27.5 L164.8 25.5 L160.6 23.7 L156.3 22.1 L152.0 20.7 L147.6 19.6 L143.3 18.7 L138.9 18.0 L134.5 17.4 L130.1 17.1 L125.7 16.8 L121.4 16.7 L117.1 16.7 L112.8 16.6 L108.5 16.5 L108.5 18.0 L112.7 18.2 L116.9 18.7 L121.1 19.6 L125.3 20.5 L129.4 21.5 L133.5 22.6 L137.6 23.8 L141.7 25.0 L145.9 26.3 L150.0 27.5 L154.2 28.8 L158.4 30.0 L162.7 31.3 L167.0 32.5 Z" fill="#5d7c42" opacity="0.8"/><path d="M167.3 27.4 L163.8 28.1 L160.4 29.5 L157.0 31.3 L153.7 33.7 L150.5 36.5 L147.4 39.9 L144.4 43.6 L141.6 47.8 L138.8 52.4 L136.1 57.3 L133.4 62.7 L130.7 68.4 L127.8 74.4 L124.8 80.7 L126.2 81.3 L129.2 75.1 L132.5 69.3 L135.8 64.1 L139.2 59.3 L142.5 54.9 L145.8 51.0 L149.1 47.5 L152.2 44.3 L155.2 41.6 L158.1 39.2 L160.8 37.1 L163.5 35.4 L166.1 33.9 L168.7 32.6 Z" fill="#5d7c42" opacity="0.8"/><path d="M165.3 30.3 L165.2 32.4 L165.2 34.9 L165.2 37.8 L165.5 41.1 L165.8 44.7 L166.2 48.8 L166.7 53.3 L167.3 58.3 L167.9 63.6 L168.6 69.3 L169.3 75.4 L169.9 82.0 L170.4 88.9 L170.7 96.3 L172.1 96.3 L171.9 88.9 L171.9 81.9 L172.1 75.3 L172.3 69.2 L172.4 63.4 L172.6 58.0 L172.7 53.0 L172.7 48.5 L172.7 44.3 L172.5 40.6 L172.2 37.2 L171.8 34.3 L171.3 31.8 L170.7 29.7 Z" fill="#5d7c42" opacity="0.8"/><path d="M167.9 32.7 L171.1 33.3 L174.1 34.2 L177.2 35.3 L180.4 36.6 L183.6 38.2 L186.9 40.0 L190.4 42.2 L193.9 44.8 L197.5 47.7 L201.2 51.0 L205.0 54.7 L208.7 58.9 L212.3 63.5 L215.8 68.6 L217.1 67.9 L213.6 62.6 L210.3 57.6 L207.2 52.9 L204.0 48.5 L200.8 44.5 L197.5 40.8 L194.1 37.5 L190.6 34.6 L187.0 32.2 L183.3 30.2 L179.5 28.7 L175.7 27.7 L171.9 27.2 L168.1 27.3 Z" fill="#5d7c42" opacity="0.8"/><path d="M169.7 32.1 L173.0 30.0 L176.3 27.9 L179.5 25.9 L182.6 23.8 L185.6 21.7 L188.6 19.6 L191.6 17.5 L194.5 15.5 L197.5 13.5 L200.4 11.6 L203.3 9.7 L206.3 8.0 L209.3 6.4 L212.5 5.2 L211.9 3.8 L208.8 5.0 L205.5 6.1 L202.1 7.1 L198.8 8.3 L195.4 9.5 L192.0 10.9 L188.6 12.4 L185.2 14.0 L181.9 15.9 L178.7 17.9 L175.5 20.1 L172.3 22.5 L169.3 25.1 L166.3 27.9 Z" fill="#5d7c42" opacity="0.8"/><path d="M169.7 27.9 L167.0 25.2 L164.2 22.7 L161.3 20.3 L158.4 18.1 L155.4 16.1 L152.3 14.2 L149.2 12.5 L146.0 11.0 L142.9 9.6 L139.7 8.4 L136.6 7.2 L133.5 6.2 L130.4 5.0 L127.5 3.8 L126.9 5.2 L129.8 6.5 L132.6 8.0 L135.3 9.8 L138.0 11.6 L140.7 13.6 L143.3 15.6 L146.0 17.6 L148.7 19.7 L151.5 21.7 L154.3 23.8 L157.2 25.9 L160.1 27.9 L163.2 30.0 L166.3 32.1 Z" fill="#5d7c42" opacity="0.8"/><ellipse cx="168" cy="38" rx="26" ry="28" fill="#2f4227"/><path d="M320 182 C328 150 337 128 352 100" stroke="#2f3329" stroke-width="4" fill="none"/><path d="M354.0 93.0 L350.3 87.6 L345.9 90.9 L341.0 86.4 L337.4 91.6 L331.9 88.8 L329.4 95.0 L324.0 94.1 L322.4 100.6 L317.6 101.5 L316.4 107.6 L312.3 110.2 L310.8 115.7 L307.1 119.0 L304.5 123.8 L307.5 126.2 L311.7 123.2 L314.6 119.4 L319.9 118.4 L322.5 115.1 L328.0 115.9 L329.8 112.3 L335.0 114.9 L336.3 110.7 L340.5 114.4 L341.7 109.6 L344.9 113.6 L346.7 108.4 L349.0 111.8 L352.0 107.0 Z" fill="#2f4628" opacity="1.0"/><path d="M356.4 93.8 L355.0 87.5 L350.0 89.0 L347.7 83.0 L342.7 86.4 L339.4 81.5 L335.0 86.2 L331.1 83.0 L327.7 88.2 L323.7 87.0 L321.2 91.9 L317.5 92.4 L315.4 96.5 L312.0 97.8 L309.4 100.8 L311.5 104.0 L315.0 103.2 L317.7 101.3 L321.7 102.7 L324.1 101.1 L327.6 104.3 L329.7 102.0 L332.4 106.5 L334.5 103.3 L336.2 108.4 L339.0 104.5 L340.1 109.4 L343.9 105.4 L344.9 109.5 L349.6 106.2 Z" fill="#2f4628" opacity="1.0"/><path d="M356.9 94.1 L356.4 87.8 L351.4 88.6 L350.7 82.4 L345.2 84.4 L343.9 78.9 L338.4 81.7 L336.5 77.2 L331.2 80.1 L328.7 77.0 L324.0 79.5 L321.1 77.6 L317.0 79.3 L313.9 77.9 L310.5 78.1 L309.5 81.9 L312.2 83.8 L315.3 84.3 L317.4 88.1 L320.6 88.5 L322.0 93.4 L325.6 92.8 L326.5 98.5 L330.8 97.0 L331.4 102.9 L336.3 100.6 L336.9 106.2 L342.3 103.6 L343.4 108.2 L349.1 105.9 Z" fill="#2f4628" opacity="1.0"/><path d="M358.4 95.4 L359.9 89.5 L355.2 89.3 L356.6 83.5 L351.1 84.2 L351.9 78.9 L346.2 80.3 L346.1 75.8 L340.6 77.4 L339.6 73.9 L334.8 75.2 L333.1 72.8 L329.1 73.5 L327.2 71.5 L324.3 71.0 L322.2 74.2 L323.6 76.6 L325.9 77.7 L326.2 81.6 L328.7 82.7 L328.1 87.5 L331.4 87.8 L330.1 93.1 L334.3 92.7 L332.8 98.2 L337.9 97.1 L336.6 102.3 L342.3 101.1 L341.8 105.6 L347.6 104.6 Z" fill="#2f4628" opacity="1.0"/><path d="M359.5 97.2 L362.6 91.8 L358.1 90.0 L361.1 84.7 L355.6 83.5 L358.0 78.6 L352.0 77.9 L353.4 73.6 L347.7 73.1 L347.9 69.5 L342.9 68.9 L342.1 66.0 L338.1 65.1 L337.0 62.5 L334.6 60.9 L331.4 63.1 L331.8 65.9 L333.6 67.9 L332.5 71.7 L334.5 73.7 L332.4 78.1 L335.5 79.7 L332.6 84.5 L336.8 85.7 L333.7 90.7 L339.0 91.6 L336.3 96.4 L342.2 97.3 L340.5 101.7 L346.5 102.8 Z" fill="#2f4628" opacity="1.0"/><path d="M360.1 99.6 L364.9 96.3 L361.4 93.4 L366.2 90.2 L361.6 87.6 L365.7 84.5 L360.5 82.0 L363.6 79.2 L358.6 76.9 L360.3 74.2 L356.1 72.0 L356.7 69.5 L353.6 67.4 L353.9 65.1 L352.6 63.0 L348.7 63.3 L347.7 65.6 L348.3 67.8 L345.6 70.3 L346.5 72.7 L342.6 75.4 L344.7 77.8 L340.1 80.7 L343.5 83.1 L338.6 86.1 L343.1 88.7 L338.8 91.8 L343.9 94.4 L340.7 97.6 L345.9 100.4 Z" fill="#2f4628" opacity="1.0"/><path d="M359.8 102.1 L365.6 100.3 L363.5 96.1 L369.2 94.5 L366.0 90.0 L371.1 88.5 L367.5 83.9 L371.5 82.2 L368.1 77.8 L370.9 75.8 L368.2 71.7 L369.9 69.4 L368.3 65.8 L369.8 63.6 L369.7 60.8 L366.3 59.2 L364.1 61.1 L363.4 63.7 L359.6 65.1 L359.2 68.0 L354.4 69.2 L355.1 72.8 L349.5 73.9 L351.4 78.0 L345.6 79.4 L348.6 84.0 L343.2 85.7 L346.8 90.6 L342.5 92.9 L346.2 97.9 Z" fill="#2f4628" opacity="1.0"/><path d="M358.5 104.5 L364.2 105.5 L363.4 101.2 L368.9 102.4 L367.4 97.5 L372.3 98.5 L370.4 93.2 L374.5 93.7 L372.9 88.6 L376.0 88.3 L375.1 83.7 L377.4 82.7 L377.3 79.0 L379.5 77.9 L380.6 75.6 L378.3 72.5 L375.7 73.0 L374.0 74.8 L370.2 74.2 L368.7 76.4 L364.0 75.2 L363.3 78.5 L358.0 76.9 L358.2 81.2 L352.6 79.9 L353.7 85.0 L348.4 84.2 L350.1 89.8 L345.6 89.9 L347.5 95.5 Z" fill="#2f4628" opacity="1.0"/><path d="M356.5 106.2 L361.6 109.1 L362.8 104.7 L367.7 107.9 L368.5 102.5 L372.9 105.3 L373.7 99.6 L377.5 101.6 L378.7 96.1 L382.0 97.0 L383.6 92.3 L386.6 92.3 L388.7 88.8 L391.7 88.6 L394.3 86.9 L393.7 83.1 L390.5 82.5 L387.5 83.6 L383.8 81.5 L381.0 83.0 L376.7 80.1 L374.2 82.9 L369.5 79.5 L367.4 83.7 L362.4 80.3 L360.9 85.7 L355.9 83.1 L354.9 89.1 L350.3 87.7 L349.5 93.8 Z" fill="#2f4628" opacity="1.0"/><path d="M355.9 106.5 L360.0 110.2 L361.0 106.4 L364.1 110.7 L365.3 106.0 L367.4 110.2 L369.4 105.3 L371.0 108.7 L374.0 104.4 L375.7 106.9 L379.5 103.9 L381.7 105.8 L385.7 104.6 L388.1 106.7 L391.5 107.7 L393.9 104.6 L391.6 101.5 L388.4 100.0 L386.7 95.8 L383.2 95.0 L381.3 90.0 L377.3 90.9 L374.6 85.4 L370.6 88.2 L366.9 83.1 L363.4 87.6 L358.9 83.8 L356.3 89.5 L351.7 87.5 L350.1 93.5 Z" fill="#2f4628" opacity="1.0"/><path d="M353.5 107.1 L355.6 112.1 L357.9 108.9 L359.0 114.2 L362.3 110.5 L362.8 115.3 L367.3 112.0 L368.1 116.2 L373.4 114.0 L374.9 117.7 L380.4 117.2 L382.7 120.7 L387.8 122.0 L390.5 125.9 L394.4 129.1 L397.6 126.9 L395.4 122.0 L391.9 118.5 L390.9 113.0 L387.1 110.2 L386.4 104.2 L381.8 102.9 L380.9 96.4 L375.5 97.0 L373.9 90.6 L368.3 93.0 L365.4 87.5 L360.4 91.5 L356.5 87.9 L352.5 92.9 Z" fill="#2f4628" opacity="1.0"/><path d="M350.8 106.7 L350.2 111.9 L353.1 109.7 L351.8 114.8 L356.3 112.7 L355.0 117.5 L360.6 116.3 L360.1 120.8 L366.2 120.9 L366.7 125.4 L372.4 127.0 L374.0 131.6 L379.0 134.8 L380.9 139.9 L384.3 144.7 L387.8 143.2 L386.5 137.3 L383.7 132.5 L383.9 126.4 L380.8 122.3 L381.8 116.0 L377.6 113.1 L378.9 106.6 L373.7 105.2 L374.6 98.7 L368.6 99.0 L368.4 92.9 L362.3 94.8 L360.5 90.0 L355.2 93.3 Z" fill="#2f4628" opacity="1.0"/><path d="M348.4 105.4 L346.1 110.1 L349.9 109.5 L347.3 114.4 L352.7 114.6 L350.6 119.7 L356.8 121.1 L355.6 126.5 L361.9 129.3 L362.0 135.0 L367.7 139.3 L368.9 145.6 L373.6 151.3 L375.1 158.4 L378.1 165.5 L381.9 164.5 L381.1 156.8 L378.7 149.8 L379.6 142.3 L376.9 136.3 L378.7 129.2 L374.9 124.3 L377.4 117.4 L372.3 114.0 L374.7 107.4 L368.7 105.3 L370.2 99.2 L363.8 98.7 L363.8 93.6 L357.6 94.6 Z" fill="#2f4628" opacity="1.0"/><path d="M346.5 102.9 L342.5 106.2 L346.3 107.0 L342.2 110.7 L347.3 112.5 L343.8 116.7 L349.5 119.5 L347.1 124.2 L352.6 128.1 L351.5 133.4 L356.3 138.3 L356.4 144.3 L360.1 150.2 L360.5 157.0 L362.4 164.0 L366.3 163.6 L366.6 156.3 L365.4 149.6 L367.4 142.8 L365.9 137.0 L369.1 130.8 L366.3 125.8 L370.3 120.1 L366.3 116.2 L370.3 111.0 L365.2 108.1 L368.7 103.5 L363.0 101.7 L365.2 97.8 L359.5 97.1 Z" fill="#2f4628" opacity="1.0"/><path d="M345.9 99.2 L340.7 101.1 L343.8 104.2 L338.6 107.0 L342.9 110.9 L338.4 114.6 L343.2 119.3 L339.7 124.0 L344.3 129.4 L342.2 135.0 L346.0 141.3 L345.1 147.7 L347.8 154.8 L347.1 162.1 L348.1 169.9 L351.9 170.1 L353.3 162.3 L353.1 154.9 L356.2 148.1 L355.7 141.6 L360.0 135.7 L358.2 130.0 L363.3 125.0 L360.3 120.1 L365.5 116.0 L361.4 112.0 L366.1 108.8 L361.3 105.5 L364.8 103.3 L360.1 100.8 Z" fill="#2f4628" opacity="1.0"/><path d="M347.0 96.1 L341.2 96.1 L342.9 100.4 L337.0 101.6 L340.1 106.5 L334.8 108.8 L338.5 114.1 L334.3 117.6 L337.9 123.3 L334.9 127.8 L337.8 133.8 L336.0 139.3 L337.8 145.7 L336.3 151.9 L336.4 158.8 L340.3 159.4 L342.5 152.9 L343.1 146.6 L347.0 141.3 L347.3 135.7 L352.3 131.4 L351.4 126.4 L357.1 123.2 L355.0 118.6 L360.7 116.6 L357.6 112.4 L362.7 111.4 L358.9 107.5 L362.7 107.4 L359.0 103.9 Z" fill="#2f4628" opacity="1.0"/><path d="M349.2 94.0 L343.3 92.2 L342.7 97.2 L336.4 96.8 L337.5 102.8 L331.5 103.9 L333.5 110.3 L328.5 112.9 L330.7 119.4 L326.8 123.4 L328.5 130.0 L325.8 135.1 L326.5 141.7 L324.1 147.7 L323.2 154.4 L326.8 155.6 L329.9 149.6 L331.5 143.5 L336.2 138.9 L337.5 133.5 L343.2 130.3 L343.3 125.3 L349.5 123.6 L348.5 118.7 L354.5 118.4 L352.5 113.5 L357.6 114.3 L355.3 109.5 L358.7 110.8 L356.8 106.0 Z" fill="#2f4628" opacity="1.0"/><path d="M353.3 97.9 L350.3 97.3 L347.2 97.1 L344.0 97.3 L340.9 97.8 L337.9 98.8 L334.9 100.1 L331.9 101.8 L329.1 103.7 L326.3 106.0 L323.5 108.5 L320.9 111.3 L318.2 114.3 L315.4 117.5 L312.6 120.9 L313.5 121.6 L316.4 118.3 L319.3 115.4 L322.4 112.9 L325.4 110.8 L328.4 108.9 L331.3 107.3 L334.1 105.9 L336.9 104.8 L339.6 103.9 L342.2 103.2 L344.8 102.7 L347.4 102.3 L350.0 102.1 L352.7 102.1 Z" fill="#587a40" opacity="0.8"/><path d="M355.0 99.1 L354.0 96.3 L353.0 93.5 L351.8 90.8 L350.6 88.2 L349.4 85.7 L348.0 83.4 L346.6 81.1 L345.1 78.9 L343.6 76.9 L342.1 74.9 L340.6 72.9 L339.1 71.1 L337.7 69.2 L336.5 67.4 L335.5 68.0 L336.7 69.9 L337.7 71.9 L338.7 74.1 L339.6 76.3 L340.5 78.6 L341.5 80.9 L342.4 83.3 L343.4 85.7 L344.5 88.2 L345.6 90.6 L346.9 93.1 L348.2 95.7 L349.6 98.2 L351.0 100.9 Z" fill="#587a40" opacity="0.8"/><path d="M354.0 101.9 L356.6 100.8 L359.2 99.7 L361.6 98.6 L364.1 97.5 L366.5 96.4 L368.9 95.3 L371.2 94.2 L373.6 93.1 L375.9 92.0 L378.3 90.9 L380.7 89.9 L383.0 89.0 L385.5 88.3 L387.9 87.8 L387.8 86.7 L385.2 87.1 L382.7 87.5 L380.1 87.8 L377.5 88.1 L374.9 88.6 L372.2 89.1 L369.6 89.7 L367.0 90.5 L364.4 91.4 L361.8 92.5 L359.3 93.7 L356.8 95.0 L354.4 96.5 L352.0 98.1 Z" fill="#587a40" opacity="0.8"/><path d="M351.6 101.6 L352.9 103.2 L354.2 105.1 L355.6 107.3 L357.2 109.8 L358.8 112.7 L360.5 116.0 L362.3 119.6 L364.2 123.5 L366.1 127.9 L368.0 132.6 L370.0 137.7 L371.9 143.2 L373.7 149.1 L375.4 155.4 L376.5 155.1 L374.9 148.8 L373.4 142.7 L372.1 137.0 L370.8 131.7 L369.4 126.7 L368.1 122.0 L366.6 117.7 L365.2 113.8 L363.6 110.3 L362.0 107.1 L360.2 104.3 L358.4 101.9 L356.4 99.9 L354.4 98.4 Z" fill="#587a40" opacity="0.8"/><path d="M351.9 98.2 L349.8 99.4 L347.7 101.0 L345.8 103.0 L343.9 105.3 L342.2 108.0 L340.6 111.1 L339.0 114.4 L337.5 118.1 L336.1 122.1 L334.7 126.4 L333.3 131.0 L331.8 136.0 L330.3 141.1 L328.6 146.6 L329.8 146.9 L331.5 141.5 L333.4 136.5 L335.3 131.8 L337.3 127.5 L339.3 123.5 L341.3 119.9 L343.2 116.6 L345.0 113.6 L346.8 110.9 L348.5 108.5 L350.0 106.5 L351.5 104.7 L352.8 103.1 L354.1 101.8 Z" fill="#587a40" opacity="0.8"/><ellipse cx="352" cy="106" rx="15" ry="18" fill="#2c4026"/><path d="M-3.9 37.5 L4.2 39.8 L5.1 33.3 L12.9 35.9 L13.0 28.3 L20.1 30.5 L20.0 22.3 L26.1 23.6 L26.4 15.7 L31.5 15.7 L32.5 8.8 L36.8 7.6 L38.8 2.0 L42.9 0.6 L46.1 -2.6 L43.9 -7.4 L39.2 -6.9 L35.5 -4.4 L29.6 -5.9 L26.1 -2.7 L19.2 -5.2 L16.5 -0.5 L8.9 -3.5 L7.1 2.9 L-0.8 0.0 L-1.6 7.7 L-9.3 5.8 L-9.4 14.3 L-16.3 13.9 L-16.1 22.5 Z" fill="#3c5a30" opacity="1.0"/><path d="M-5.9 38.8 L1.4 42.9 L3.9 36.8 L10.9 41.3 L13.0 33.9 L19.4 37.8 L21.5 29.9 L27.2 32.6 L29.6 25.0 L34.8 26.3 L37.8 19.8 L42.5 19.8 L46.2 14.9 L50.9 14.6 L55.1 12.3 L54.3 7.1 L49.4 6.3 L44.8 7.8 L39.2 4.9 L34.7 7.0 L28.5 2.9 L24.3 6.8 L17.6 2.0 L14.0 7.7 L6.9 3.0 L4.0 10.3 L-3.1 6.6 L-5.4 14.9 L-12.1 12.8 L-14.1 21.2 Z" fill="#3c5a30" opacity="1.0"/><path d="M-5.0 38.3 L3.6 41.3 L6.7 34.7 L14.3 38.8 L17.2 31.3 L23.6 35.6 L27.1 28.0 L32.6 31.7 L37.1 24.8 L42.2 27.5 L47.8 22.4 L53.0 24.3 L59.4 21.6 L64.8 23.8 L71.0 24.4 L73.0 19.6 L67.5 15.8 L61.2 14.6 L55.8 9.3 L49.3 9.3 L43.3 3.3 L36.6 5.9 L29.4 -0.3 L23.2 5.0 L15.0 -0.3 L9.7 7.3 L0.8 3.9 L-3.2 12.9 L-11.9 12.1 L-15.0 21.7 Z" fill="#3c5a30" opacity="1.0"/><path d="M-7.0 39.2 L0.2 44.2 L4.3 38.6 L10.3 44.6 L14.8 38.1 L19.8 43.9 L25.2 37.5 L29.7 42.6 L36.3 37.3 L41.0 41.3 L48.3 38.1 L53.6 41.5 L61.2 40.9 L66.8 44.8 L73.6 47.3 L76.5 43.0 L71.2 37.6 L64.6 34.5 L60.1 27.7 L53.2 25.9 L48.4 18.3 L40.9 18.9 L35.3 11.0 L27.7 14.3 L21.0 7.0 L13.8 12.9 L6.1 7.4 L-0.0 15.1 L-8.0 12.2 L-13.0 20.8 Z" fill="#3c5a30" opacity="1.0"/><path d="M-8.7 39.6 L-2.1 45.8 L3.7 41.2 L9.1 48.3 L15.8 43.0 L20.5 50.0 L28.3 45.3 L32.9 51.6 L41.9 48.4 L47.1 54.1 L56.4 53.3 L62.6 58.7 L71.7 60.6 L78.2 66.8 L86.2 71.9 L89.8 68.1 L83.8 60.5 L76.3 55.0 L71.4 46.3 L63.6 42.2 L58.9 33.0 L50.1 31.4 L45.1 21.9 L35.7 23.1 L29.5 14.2 L20.2 18.2 L12.9 11.0 L4.3 17.3 L-3.9 12.9 L-11.3 20.4 Z" fill="#3c5a30" opacity="1.0"/><path d="M-11.1 39.6 L-6.6 47.2 L0.0 44.2 L3.4 52.4 L11.4 49.2 L14.4 57.3 L23.8 55.0 L27.3 62.7 L37.4 62.3 L42.0 69.7 L52.2 71.8 L57.9 79.2 L67.4 84.0 L73.6 92.4 L81.4 100.1 L85.7 97.0 L80.2 87.2 L72.9 79.3 L69.1 68.9 L61.5 62.4 L58.3 51.8 L49.5 47.6 L46.3 36.8 L36.4 35.4 L32.4 25.0 L22.1 26.3 L16.7 17.4 L6.7 21.2 L-0.1 14.9 L-8.9 20.4 Z" fill="#3c5a30" opacity="1.0"/><path d="M-13.0 39.2 L-9.4 47.9 L-1.3 46.7 L1.4 56.1 L11.1 55.3 L13.8 65.0 L24.8 65.7 L28.4 75.4 L40.0 78.5 L44.8 88.4 L56.1 94.1 L62.3 104.6 L72.7 113.1 L79.2 124.9 L87.7 136.3 L92.3 133.7 L86.5 120.5 L78.8 109.2 L74.9 96.0 L66.7 86.3 L63.8 73.3 L54.3 66.0 L51.6 53.3 L40.9 48.8 L37.6 36.7 L26.1 35.1 L21.5 24.5 L9.9 25.6 L3.6 17.5 L-7.0 20.8 Z" fill="#3c5a30" opacity="1.0"/><path d="M-14.1 38.8 L-12.5 47.3 L-5.2 46.6 L-4.4 55.7 L4.6 55.5 L5.7 64.7 L16.0 66.0 L18.0 75.4 L28.7 78.8 L32.1 88.4 L42.4 94.2 L47.2 104.4 L56.5 112.7 L61.7 124.1 L68.9 135.1 L73.6 132.8 L69.2 120.2 L62.9 109.3 L60.5 96.8 L53.7 87.3 L52.4 75.0 L44.1 67.7 L43.3 55.6 L33.7 50.8 L32.4 39.2 L21.8 37.0 L19.3 26.6 L8.5 27.0 L4.1 18.8 L-5.9 21.2 Z" fill="#3c5a30" opacity="1.0"/><path d="M-15.3 38.1 L-15.1 46.7 L-7.8 46.9 L-8.2 56.1 L0.9 57.1 L1.0 66.6 L11.2 69.3 L12.4 79.1 L22.9 83.8 L25.6 94.1 L35.5 101.2 L39.7 112.2 L48.4 121.7 L53.0 133.9 L59.6 146.0 L64.4 144.0 L60.8 130.7 L55.0 118.8 L53.5 105.7 L47.3 95.4 L47.0 82.6 L39.3 74.4 L39.6 62.0 L30.5 56.1 L30.5 44.4 L20.2 40.9 L19.0 30.4 L8.4 29.3 L5.4 20.8 L-4.7 21.9 Z" fill="#3c5a30" opacity="1.0"/><path d="M-16.5 37.2 L-18.0 45.3 L-11.1 46.4 L-12.9 55.1 L-4.1 57.1 L-5.4 66.4 L4.4 70.0 L4.4 79.7 L14.3 85.3 L15.9 95.6 L25.0 103.4 L28.1 114.4 L36.0 124.4 L39.5 136.7 L45.1 148.9 L50.1 147.3 L47.5 134.0 L42.8 122.0 L42.4 109.1 L37.3 98.5 L38.2 86.1 L31.6 77.5 L33.2 65.6 L25.0 59.1 L26.6 47.8 L17.1 43.5 L17.6 33.3 L7.5 31.3 L6.2 22.8 L-3.5 22.8 Z" fill="#3c5a30" opacity="1.0"/><path d="M-17.6 36.0 L-20.1 44.2 L-13.1 46.6 L-15.8 55.6 L-7.1 59.3 L-9.1 69.1 L0.6 74.6 L-0.0 85.1 L9.6 92.6 L10.6 104.0 L19.4 113.6 L22.0 126.0 L29.4 137.8 L32.3 151.6 L37.4 165.6 L42.6 164.4 L40.5 149.5 L36.4 136.0 L36.6 121.9 L32.0 109.8 L33.7 96.6 L27.5 86.4 L30.0 73.9 L22.3 65.9 L24.8 54.3 L15.6 48.4 L17.2 38.0 L7.4 34.3 L7.2 25.6 L-2.4 24.0 Z" fill="#3c5a30" opacity="1.0"/><path d="M-8.2 32.3 L-4.6 29.9 L-1.1 27.6 L2.2 25.2 L5.6 22.9 L8.8 20.5 L12.0 18.1 L15.1 15.8 L18.2 13.4 L21.3 11.1 L24.4 8.8 L27.5 6.6 L30.6 4.5 L33.8 2.6 L37.1 1.0 L36.4 -0.5 L33.0 1.1 L29.6 2.5 L26.0 3.9 L22.4 5.3 L18.8 6.9 L15.2 8.5 L11.7 10.3 L8.1 12.3 L4.6 14.4 L1.2 16.7 L-2.2 19.2 L-5.5 21.9 L-8.7 24.7 L-11.8 27.7 Z" fill="#6c8c4a" opacity="0.8"/><path d="M-9.6 32.9 L-3.9 32.7 L1.8 32.9 L7.5 33.4 L13.1 34.3 L18.8 35.4 L24.6 36.9 L30.4 38.7 L36.4 41.0 L42.4 43.6 L48.4 46.8 L54.6 50.4 L60.7 54.5 L66.8 59.2 L72.8 64.6 L73.8 63.4 L67.9 58.0 L62.1 52.8 L56.3 47.9 L50.6 43.4 L44.7 39.4 L38.8 35.9 L32.9 32.8 L26.8 30.2 L20.7 28.2 L14.5 26.8 L8.2 26.0 L2.0 25.8 L-4.2 26.1 L-10.4 27.1 Z" fill="#6c8c4a" opacity="0.8"/><path d="M-11.6 32.4 L-7.7 35.7 L-3.7 39.5 L0.4 43.8 L4.6 48.6 L8.9 53.9 L13.3 59.7 L17.9 66.2 L22.5 73.2 L27.2 80.7 L31.9 88.9 L36.7 97.7 L41.5 107.2 L46.0 117.3 L50.5 128.0 L51.9 127.5 L47.6 116.6 L43.5 106.3 L39.5 96.4 L35.5 87.2 L31.5 78.5 L27.4 70.3 L23.3 62.8 L19.1 55.8 L14.8 49.4 L10.4 43.7 L5.8 38.7 L1.2 34.3 L-3.6 30.6 L-8.4 27.6 Z" fill="#6c8c4a" opacity="0.8"/><path d="M-5 -5 L30 -5 C45 30 45 80 40 120 L20 180 L-5 190 Z" fill="#3d5a30"/><path d="M-1.2 124.4 L4.5 125.0 L5.9 120.3 L11.5 121.1 L12.4 115.8 L17.5 116.4 L18.3 110.9 L22.8 111.0 L23.8 105.7 L27.7 105.0 L29.2 100.3 L32.6 99.0 L34.6 95.2 L37.9 93.9 L40.7 91.4 L39.3 88.6 L35.6 89.4 L32.5 91.4 L28.1 91.1 L25.1 93.5 L20.1 92.7 L17.6 96.1 L12.2 95.0 L10.3 99.4 L4.6 98.4 L3.3 103.7 L-2.2 103.3 L-3.0 109.1 L-8.1 109.7 L-8.8 115.6 Z" fill="#557a38" opacity="1.0"/><path d="M-4.2 125.7 L1.2 129.3 L6.0 126.4 L10.6 130.7 L15.8 127.6 L20.0 132.0 L25.9 129.4 L30.0 133.6 L36.6 132.2 L41.0 136.2 L47.9 136.4 L52.9 140.4 L59.7 142.4 L64.9 147.0 L70.9 151.2 L73.1 148.8 L68.1 143.2 L62.3 138.9 L58.1 132.9 L52.1 129.6 L48.0 123.4 L41.4 121.9 L37.0 115.7 L30.1 116.1 L25.0 110.4 L18.2 112.7 L12.4 108.3 L6.0 112.1 L-0.2 109.5 L-5.8 114.3 Z" fill="#557a38" opacity="1.0"/><path d="M-6.1 125.7 L-1.2 131.1 L5.7 130.6 L10.0 136.9 L17.8 136.9 L22.0 143.7 L30.6 144.8 L35.2 152.0 L44.2 154.8 L49.5 162.4 L58.5 167.2 L64.5 175.4 L73.0 182.4 L79.3 191.7 L86.7 200.9 L89.3 199.1 L83.4 188.8 L76.5 179.8 L71.6 169.7 L64.4 162.0 L60.0 152.3 L52.1 146.6 L47.8 137.4 L39.1 133.7 L34.4 125.3 L25.4 123.8 L19.8 116.7 L10.9 117.2 L4.4 112.1 L-3.9 114.3 Z" fill="#557a38" opacity="1.0"/><path d="M-8.3 124.8 L-6.6 131.3 L-0.4 133.1 L1.0 140.5 L8.2 143.4 L9.9 151.5 L17.9 155.8 L20.2 164.6 L28.3 170.8 L31.6 180.3 L39.3 188.4 L43.5 198.9 L50.4 208.9 L54.9 220.6 L60.5 232.6 L63.5 231.4 L59.6 218.7 L54.4 207.2 L51.8 195.1 L46.4 185.0 L44.5 173.7 L38.3 165.3 L36.8 154.7 L29.6 148.2 L27.9 138.6 L20.1 134.0 L17.7 125.5 L9.6 122.9 L6.1 116.1 L-1.7 115.2 Z" fill="#557a38" opacity="1.0"/><path d="M-5 150 C30 160 60 185 80 220 C92 245 70 270 40 290 L-5 305 Z" fill="#7ea03f"/><path d="M-5 205 C40 205 85 220 100 245 C80 258 40 265 -5 272 Z" fill="#a6c05a"/><path d="M-5 265 C30 255 60 270 65 300 L30 312 L-5 308 Z" fill="#5a8532"/><path d="M12.9 253.4 L18.5 253.0 L20.6 248.4 L26.1 248.1 L27.9 243.2 L33.0 242.7 L34.6 237.6 L39.3 236.8 L41.1 231.9 L45.3 230.5 L47.4 226.1 L51.2 224.3 L53.7 220.6 L57.4 218.7 L60.6 216.1 L59.4 213.9 L55.4 215.3 L52.0 217.7 L47.4 218.2 L44.1 220.9 L39.0 221.1 L36.1 224.5 L30.7 224.5 L28.2 228.8 L22.7 228.9 L20.7 233.8 L15.3 234.4 L13.6 239.8 L8.7 241.1 L7.1 246.6 Z" fill="#9ab852" opacity="1.0"/><path d="M11.4 254.3 L17.4 255.7 L21.9 252.1 L27.8 253.7 L32.1 249.6 L37.8 251.0 L42.1 246.7 L47.5 247.6 L52.0 243.6 L57.3 243.9 L61.9 240.5 L67.1 240.3 L71.9 237.7 L77.1 237.4 L82.1 236.2 L81.9 233.8 L76.7 233.5 L71.5 234.4 L66.1 233.2 L61.0 234.4 L55.3 232.8 L50.3 234.9 L44.5 233.0 L39.7 236.1 L33.7 234.2 L29.1 238.2 L23.1 236.9 L18.7 241.4 L12.8 241.0 L8.6 245.7 Z" fill="#9ab852" opacity="1.0"/><path d="M11.3 254.3 L17.7 255.9 L22.8 252.6 L28.7 254.8 L33.9 251.4 L39.4 253.9 L44.9 250.8 L50.3 253.2 L56.2 250.9 L61.5 253.1 L67.8 252.0 L73.3 254.1 L79.7 254.4 L85.3 257.0 L91.5 259.1 L92.5 256.9 L86.9 253.4 L80.9 251.2 L75.5 247.4 L69.4 246.0 L63.9 242.0 L57.5 242.1 L51.7 238.3 L45.4 239.9 L39.1 236.7 L33.0 239.7 L26.4 237.5 L20.7 241.6 L14.0 240.9 L8.7 245.7 Z" fill="#9ab852" opacity="1.0"/><path d="M9.7 254.5 L13.4 258.1 L17.8 256.6 L21.1 260.6 L25.9 259.0 L29.0 263.1 L34.3 261.8 L37.6 265.7 L43.2 265.3 L46.8 268.9 L52.5 269.7 L56.5 273.3 L62.1 275.3 L66.3 279.3 L71.1 282.9 L72.9 281.1 L68.9 276.4 L64.2 272.7 L60.9 267.6 L56.1 264.7 L52.9 259.4 L47.6 257.6 L44.4 252.4 L38.8 251.9 L35.3 247.0 L29.5 247.9 L25.5 243.7 L19.9 245.7 L15.4 242.8 L10.3 245.5 Z" fill="#9ab852" opacity="1.0"/><path d="M55 455 C80 390 120 330 158 272 C180 300 200 350 198 405 C185 430 150 450 120 460 Z" fill="#66903a"/><path d="M95 455 C120 400 145 345 162 292 C172 330 180 380 172 420 L150 460 Z" fill="#8fb24c"/><path d="M60 368 C72 380 84 402 88 432 L72 434 C62 412 56 390 60 368 Z" fill="#bdb54a"/><path d="M160 452 C195 436 235 428 255 432 C230 444 200 452 180 458 Z" fill="#88a846"/></g><path d="M162.0 290.0 L210.0 276.0" stroke="#5c8030" stroke-width="2.2" opacity="0.55" filter="url(#b1)"/><path d="M157.3 299.4 L205.3 285.4" stroke="#5c8030" stroke-width="2.2" opacity="0.55" filter="url(#b1)"/><path d="M152.6 308.8 L200.6 294.8" stroke="#5c8030" stroke-width="2.2" opacity="0.55" filter="url(#b1)"/><path d="M147.9 318.2 L195.9 304.2" stroke="#5c8030" stroke-width="2.2" opacity="0.55" filter="url(#b1)"/><path d="M143.2 327.6 L191.2 313.6" stroke="#5c8030" stroke-width="2.2" opacity="0.55" filter="url(#b1)"/><path d="M138.5 337.1 L186.5 323.1" stroke="#5c8030" stroke-width="2.2" opacity="0.55" filter="url(#b1)"/><path d="M133.8 346.5 L181.8 332.5" stroke="#5c8030" stroke-width="2.2" opacity="0.55" filter="url(#b1)"/><path d="M129.1 355.9 L177.1 341.9" stroke="#5c8030" stroke-width="2.2" opacity="0.55" filter="url(#b1)"/><path d="M124.4 365.3 L172.4 351.3" stroke="#5c8030" stroke-width="2.2" opacity="0.55" filter="url(#b1)"/><path d="M119.6 374.7 L167.6 360.7" stroke="#5c8030" stroke-width="2.2" opacity="0.55" filter="url(#b1)"/><path d="M114.9 384.1 L162.9 370.1" stroke="#5c8030" stroke-width="2.2" opacity="0.55" filter="url(#b1)"/><path d="M110.2 393.5 L158.2 379.5" stroke="#5c8030" stroke-width="2.2" opacity="0.55" filter="url(#b1)"/><path d="M105.5 402.9 L153.5 388.9" stroke="#5c8030" stroke-width="2.2" opacity="0.55" filter="url(#b1)"/><path d="M100.8 412.4 L148.8 398.4" stroke="#5c8030" stroke-width="2.2" opacity="0.55" filter="url(#b1)"/><path d="M96.1 421.8 L144.1 407.8" stroke="#5c8030" stroke-width="2.2" opacity="0.55" filter="url(#b1)"/><path d="M91.4 431.2 L139.4 417.2" stroke="#5c8030" stroke-width="2.2" opacity="0.55" filter="url(#b1)"/><path d="M86.7 440.6 L134.7 426.6" stroke="#5c8030" stroke-width="2.2" opacity="0.55" filter="url(#b1)"/><path d="M82.0 450.0 L130.0 436.0" stroke="#5c8030" stroke-width="2.2" opacity="0.55" filter="url(#b1)"/><path d="M-5 398 L55 386 L72 455 L-5 455 Z" fill="#554a3e" filter="url(#b15)"/></g></svg>
<div class="a" style="left:2091px;top:198px;width:453px;height:1229px;background:#fff;border-left:1px solid #cfcfcf"></div>
<div class="a" style="left:2541px;top:198px;width:3px;height:1229px;background:#dedede"></div>
<div class="a" style="left:2092px;top:198px;width:449px;height:51px;background:#ebebeb"></div>
<div class="a t" style="left:2110.8px;top:213.18px;font-size:24px;color:#585858;font-weight:normal;transform:scaleX(1.0360);transform-origin:0 0;">Dimensions</div>
<div class="a" style="left:2092px;top:249px;width:449px;height:34.5px;background:#d0d0d0;border-bottom:1.5px solid #555"></div>
<div class="a" style="left:2263px;top:251px;width:2px;height:31px;background:#555"></div>
<div class="a t" style="left:2108.5px;top:259.06px;font-size:16px;color:#404040;font-weight:bold;transform:scaleX(1.0601);transform-origin:0 0;">Name</div>
<svg class="a" style="left:2167px;top:255px" width="12" height="21" viewBox="0 0 12 21"><path d="M6 20.5 L10.5 15 L7 15 L7 0 L5 0 L5 15 L1.5 15 Z" fill="#8a8a8a"/></svg>
<div class="a t" style="left:2280.5px;top:259.06px;font-size:16px;color:#404040;font-weight:bold;transform:scaleX(1.0429);transform-origin:0 0;">Value</div>
<div class="a" style="left:2092px;top:284px;width:449px;height:36px;background:#fff;border-bottom:1px solid #e9e9e9;border-right:1px solid #e0e0e0"></div>
<div class="a" style="left:2264px;top:284px;width:1px;height:36px;background:#e9e9e9"></div>
<div class="a t" style="left:2108px;top:292.42px;font-size:20.3px;color:#444444;font-weight:normal;transform:scaleX(1.0297);transform-origin:0 0;">width</div>
<div class="a t" style="left:2280.5px;top:292.42px;font-size:20.3px;color:#444444;font-weight:normal;transform:scaleX(0.9654);transform-origin:0 0;">2000</div>
<div class="a" style="left:2092px;top:320px;width:449px;height:36px;background:#f5f5f5;border-bottom:1px solid #e9e9e9;border-right:1px solid #e0e0e0"></div>
<div class="a" style="left:2264px;top:320px;width:1px;height:36px;background:#e9e9e9"></div>
<div class="a t" style="left:2108px;top:328.42px;font-size:20.3px;color:#444444;font-weight:normal;transform:scaleX(1.0179);transform-origin:0 0;">height</div>
<div class="a t" style="left:2280.5px;top:328.42px;font-size:20.3px;color:#444444;font-weight:normal;transform:scaleX(0.9654);transform-origin:0 0;">1500</div>
<div class="a" style="left:2092px;top:372px;width:449px;height:51px;background:#ebebeb"></div>
<div class="a t" style="left:2110.8px;top:387.18px;font-size:24px;color:#585858;font-weight:normal;transform:scaleX(1.0506);transform-origin:0 0;">Convert to &amp; Download</div>
<div class="a t" style="left:2108.5px;top:453.12px;font-size:20.3px;color:#444444;font-weight:normal;transform:scaleX(1.0010);transform-origin:0 0;">Format:</div>
<div class="a" style="left:2265px;top:438px;width:255px;height:48px;background:#fff;border:1px solid #c8c8c8"></div>
<div class="a" style="left:2470px;top:439px;width:1px;height:46px;background:#f0f0f0"></div>
<div class="a t" style="left:2281.5px;top:453.32px;font-size:20.3px;color:#444444;font-weight:normal;transform:scaleX(0.7978);transform-origin:0 0;">JPEG</div>
<svg class="a" style="left:2486px;top:458px" width="16" height="10" viewBox="0 0 16 10"><path d="M1 1 L15 1 L8 8 Z" fill="#6f6f6f"/></svg>
<div class="a t" style="left:2108.5px;top:516.12px;font-size:20.3px;color:#444444;font-weight:normal;transform:scaleX(1.0082);transform-origin:0 0;">Width:</div>
<div class="a" style="left:2265px;top:501px;width:255px;height:48px;background:#fff;border:1px solid #c8c8c8"></div>
<div class="a" style="left:2470px;top:502px;width:1px;height:46px;background:#f0f0f0"></div>
<div class="a t" style="left:2281.5px;top:516.32px;font-size:20.3px;color:#444444;font-weight:normal;transform:scaleX(0.9566);transform-origin:0 0;">800</div>
<svg class="a" style="left:2486px;top:513px" width="16" height="30" viewBox="0 0 16 30"><path d="M1 8 L8 1 L15 8 Z" fill="#6f6f6f"/><path d="M1 21.5 L15 21.5 L8 28.5 Z" fill="#6f6f6f"/></svg>
<div class="a t" style="left:2108.5px;top:579.12px;font-size:20.3px;color:#444444;font-weight:normal;transform:scaleX(0.9950);transform-origin:0 0;">Height:</div>
<div class="a" style="left:2265px;top:564px;width:255px;height:48px;background:#fff;border:1px solid #c8c8c8"></div>
<div class="a" style="left:2470px;top:565px;width:1px;height:46px;background:#f0f0f0"></div>
<svg class="a" style="left:2486px;top:576px" width="16" height="30" viewBox="0 0 16 30"><path d="M1 8 L8 1 L15 8 Z" fill="#6f6f6f"/><path d="M1 21.5 L15 21.5 L8 28.5 Z" fill="#6f6f6f"/></svg>
<div class="a t" style="left:2108.5px;top:642.12px;font-size:20.3px;color:#444444;font-weight:normal;transform:scaleX(0.9953);transform-origin:0 0;">Quality:</div>
<div class="a" style="left:2265px;top:627px;width:255px;height:48px;background:#fff;border:1px solid #c8c8c8"></div>
<div class="a" style="left:2470px;top:628px;width:1px;height:46px;background:#f0f0f0"></div>
<div class="a t" style="left:2281.5px;top:642.32px;font-size:20.3px;color:#444444;font-weight:normal;transform:scaleX(0.9654);transform-origin:0 0;">95</div>
<svg class="a" style="left:2486px;top:639px" width="16" height="30" viewBox="0 0 16 30"><path d="M1 8 L8 1 L15 8 Z" fill="#6f6f6f"/><path d="M1 21.5 L15 21.5 L8 28.5 Z" fill="#6f6f6f"/></svg>
<div class="a t" style="left:2108px;top:704.52px;font-size:20.3px;color:#444444;font-weight:normal;transform:scaleX(0.9641);transform-origin:0 0;">Aspect Ratio:</div>
<svg class="a" style="left:2265px;top:701px" width="26" height="22" viewBox="0 0 26 22"><rect x="1" y="2" width="19" height="19" rx="3" fill="none" stroke="#8a8a8a" stroke-width="2"/><path d="M5 11 L10 16 L24 2" stroke="#8a8a8a" stroke-width="3.5" fill="none"/></svg>
<div class="a" style="left:2092px;top:768px;width:449px;height:66px;background:#ebebeb"></div>
<div class="a" style="left:2378px;top:777px;width:153px;height:48px;background:#3a3d41;border:1px solid #111"></div>
<svg class="a" style="left:2392px;top:789px" width="19" height="22" viewBox="0 0 19 22"><rect x="7" y="0" width="4" height="1.6" fill="#1e88e5"/><rect x="7" y="3" width="4" height="1.6" fill="#1e88e5"/><rect x="7" y="6" width="4" height="5" fill="#1e88e5"/><path d="M3 10 L15 10 L9 16 Z" fill="#1e88e5"/><rect x="0" y="19" width="19" height="2" fill="#1e88e5"/></svg>
<div class="a t" style="left:2426px;top:790.74px;font-size:19.8px;color:#fff;font-weight:normal;transform:scaleX(0.9573);transform-origin:0 0;">Download</div>
<div class="a" style="left:2092px;top:849px;width:449px;height:51px;background:#ebebeb"></div>
<div class="a t" style="left:2110.8px;top:864.18px;font-size:24px;color:#585858;font-weight:normal;transform:scaleX(0.9367);transform-origin:0 0;">EXIF Data</div>
<div class="a" style="left:2092px;top:900px;width:449px;height:34.5px;background:#d0d0d0;border-bottom:1.5px solid #555"></div>
<div class="a" style="left:2263px;top:902px;width:2px;height:31px;background:#555"></div>
<div class="a t" style="left:2108.5px;top:910.06px;font-size:16px;color:#404040;font-weight:bold;transform:scaleX(1.0601);transform-origin:0 0;">Name</div>
<svg class="a" style="left:2167px;top:906px" width="12" height="21" viewBox="0 0 12 21"><path d="M6 0.5 L10.5 6 L7 6 L7 21 L5 21 L5 6 L1.5 6 Z" fill="#8a8a8a"/></svg>
<div class="a t" style="left:2280.5px;top:910.06px;font-size:16px;color:#404040;font-weight:bold;transform:scaleX(1.0429);transform-origin:0 0;">Value</div>
<div class="a" style="left:2092px;top:935px;width:449px;height:36px;background:#fff;border-bottom:1px solid #e9e9e9;border-right:1px solid #e0e0e0"></div>
<div class="a" style="left:2264px;top:935px;width:1px;height:36px;background:#e9e9e9"></div>
<div class="a t" style="left:2108px;top:943.42px;font-size:20.3px;color:#444444;font-weight:normal;transform:scaleX(0.9762);transform-origin:0 0;">FileDateTime</div>
<div class="a t" style="left:2280.5px;top:943.42px;font-size:20.3px;color:#444444;font-weight:normal;transform:scaleX(0.9849);transform-origin:0 0;">1464588188</div>
<div class="a" style="left:2092px;top:971px;width:449px;height:36px;background:#f5f5f5;border-bottom:1px solid #e9e9e9;border-right:1px solid #e0e0e0"></div>
<div class="a" style="left:2264px;top:971px;width:1px;height:36px;background:#e9e9e9"></div>
<div class="a t" style="left:2108px;top:979.42px;font-size:20.3px;color:#444444;font-weight:normal;transform:scaleX(0.9739);transform-origin:0 0;">FileName</div>
<div class="a t" style="left:2280.5px;top:979.42px;font-size:20.3px;color:#444444;font-weight:normal;transform:scaleX(0.9812);transform-origin:0 0;">img_0399.jpg</div>
<div class="a" style="left:2092px;top:1007px;width:449px;height:36px;background:#fff;border-bottom:1px solid #e9e9e9;border-right:1px solid #e0e0e0"></div>
<div class="a" style="left:2264px;top:1007px;width:1px;height:36px;background:#e9e9e9"></div>
<div class="a t" style="left:2108px;top:1015.42px;font-size:20.3px;color:#444444;font-weight:normal;transform:scaleX(0.9058);transform-origin:0 0;">FileSize</div>
<div class="a t" style="left:2280.5px;top:1015.42px;font-size:20.3px;color:#444444;font-weight:normal;transform:scaleX(0.9817);transform-origin:0 0;">922970</div>
<div class="a" style="left:2092px;top:1043px;width:449px;height:36px;background:#f5f5f5;border-bottom:1px solid #e9e9e9;border-right:1px solid #e0e0e0"></div>
<div class="a" style="left:2264px;top:1043px;width:1px;height:36px;background:#e9e9e9"></div>
<div class="a t" style="left:2108px;top:1051.42px;font-size:20.3px;color:#444444;font-weight:normal;transform:scaleX(0.9580);transform-origin:0 0;">FileType</div>
<div class="a t" style="left:2280.5px;top:1051.42px;font-size:20.3px;color:#444444;font-weight:normal;transform:scaleX(0.9477);transform-origin:0 0;">2</div>
<div class="a" style="left:2092px;top:1079px;width:449px;height:36px;background:#fff;border-bottom:1px solid #e9e9e9;border-right:1px solid #e0e0e0"></div>
<div class="a" style="left:2264px;top:1079px;width:1px;height:36px;background:#e9e9e9"></div>
<div class="a t" style="left:2108px;top:1087.42px;font-size:20.3px;color:#444444;font-weight:normal;transform:scaleX(1.0060);transform-origin:0 0;">MimeType</div>
<div class="a t" style="left:2280.5px;top:1087.42px;font-size:20.3px;color:#444444;font-weight:normal;transform:scaleX(1.0150);transform-origin:0 0;">image/jpeg</div>
<div class="a" style="left:2092px;top:1115px;width:449px;height:36px;background:#f5f5f5;border-bottom:1px solid #e9e9e9;border-right:1px solid #e0e0e0"></div>
<div class="a" style="left:2264px;top:1115px;width:1px;height:36px;background:#e9e9e9"></div>
<div class="a t" style="left:2108px;top:1123.42px;font-size:20.3px;color:#444444;font-weight:normal;transform:scaleX(0.9732);transform-origin:0 0;">SectionsFound</div>
<div class="a" style="left:90px;top:1426px;width:511px;height:1px;background:#a4a4a4"></div>
<div class="a" style="left:601px;top:1426px;width:1943px;height:1px;background:#d8d8d8"></div>
<div class="a" style="left:276px;top:423px;width:208px;height:403px;background:#fff;border:1px solid #d8d8d8;box-shadow:-2px 2px 5px rgba(0,0,0,0.25)"></div>
<div class="a" style="left:277px;top:424px;width:206px;height:47px;background:#3a3d41"></div>
<div class="a" style="left:277px;top:522px;width:206px;height:2px;background:#e3e3e3"></div>
<div class="a" style="left:277px;top:723px;width:206px;height:2px;background:#e3e3e3"></div>
<svg class="a" style="left:284px;top:434px" width="34" height="30" viewBox="0 0 34 30"><rect x="5" y="5" width="26" height="21" rx="3" fill="#e65100"/><rect x="0" y="0" width="27" height="22" rx="3" fill="#ff8f00"/><path d="M4 17 L11 8 L15 13 L18 10 L23 17 Z" fill="#a1300c"/><circle cx="20" cy="6" r="2" fill="#ffe0b2"/><circle cx="25" cy="21" r="7.5" fill="#4caf50"/><rect x="20.5" y="19.8" width="9" height="2.4" fill="#fff"/><rect x="23.8" y="16.5" width="2.4" height="9" fill="#fff"/></svg>
<div class="a t" style="left:330px;top:437.82px;font-size:20.3px;color:#fff;font-weight:normal;transform:scaleX(0.9583);transform-origin:0 0;">Add asset(s)</div>
<svg class="a" style="left:284px;top:482px" width="34" height="30" viewBox="0 0 34 30"><path d="M0 3 Q0 0 3 0 L11 0 L14 3 L25 3 Q28 3 28 6 L28 22 L0 22 Z" fill="#c49a5a"/><path d="M5 7 L27 7 Q29 7 29 9 L27 22 L2 22 Z" fill="#fdd56e"/><circle cx="25" cy="22" r="7.5" fill="#4caf50"/><rect x="20.5" y="20.8" width="9" height="2.4" fill="#fff"/><rect x="23.8" y="17.5" width="2.4" height="9" fill="#fff"/></svg>
<div class="a t" style="left:330px;top:485.82px;font-size:20.3px;color:#444444;font-weight:normal;transform:scaleX(0.9939);transform-origin:0 0;">Add Folder</div>
<svg class="a" style="left:288px;top:537px" width="28" height="33" viewBox="0 0 28 33"><rect x="0" y="0" width="22" height="15" rx="5" fill="#ffa000"/><rect x="6" y="4" width="10" height="3" rx="1.5" fill="#fff"/><path d="M8 14 L15 14 L15 30 L11.5 33 L8 30 Z" fill="#ffa000"/><path d="M12 21 L19 21 L19 16 L27 24 L19 32 L19 27 L12 27 Z" fill="#4caf50"/></svg>
<div class="a t" style="left:330px;top:542.82px;font-size:20.3px;color:#444444;font-weight:normal;transform:scaleX(0.9644);transform-origin:0 0;">Rename</div>
<svg class="a" style="left:286px;top:584px" width="30" height="32" viewBox="0 0 30 32"><path d="M0 0 L12 0 L17 5 L17 24 L0 24 Z" fill="#90caf9"/><path d="M10 8 L22 8 L28 14 L28 32 L10 32 Z" fill="#90caf9" stroke="#e3f2fd" stroke-width="1"/></svg>
<div class="a t" style="left:330px;top:590.82px;font-size:20.3px;color:#444444;font-weight:normal;transform:scaleX(0.9622);transform-origin:0 0;">Copy</div>
<svg class="a" style="left:287px;top:633px" width="28" height="30" viewBox="0 0 28 30"><path d="M6 1 L16 20 M20 1 L11 20" stroke="#37474f" stroke-width="1.6" fill="none"/><circle cx="8" cy="24" r="4.5" fill="none" stroke="#37474f" stroke-width="2.4"/><circle cx="19" cy="24" r="4.5" fill="none" stroke="#37474f" stroke-width="2.4"/></svg>
<div class="a t" style="left:330px;top:638.82px;font-size:20.3px;color:#444444;font-weight:normal;transform:scaleX(0.9560);transform-origin:0 0;">Cut</div>
<svg class="a" style="left:287px;top:683px" width="27" height="27" viewBox="0 0 27 27"><circle cx="13.5" cy="13.5" r="13" fill="#f44336"/><path d="M8.5 8.5 L18.5 18.5 M18.5 8.5 L8.5 18.5" stroke="#fff" stroke-width="3.2"/></svg>
<div class="a t" style="left:330px;top:686.82px;font-size:20.3px;color:#444444;font-weight:normal;transform:scaleX(0.9884);transform-origin:0 0;">Delete</div>
<svg class="a" style="left:282px;top:746px" width="36" height="13" viewBox="0 0 36 13"><circle cx="6" cy="6.5" r="5.5" fill="#607d8b"/><circle cx="18" cy="6.5" r="5.5" fill="#607d8b"/><circle cx="30" cy="6.5" r="5.5" fill="#607d8b"/></svg>
<div class="a t" style="left:330px;top:743.82px;font-size:20.3px;color:#444444;font-weight:normal;transform:scaleX(0.9735);transform-origin:0 0;">Advanced</div>
<svg class="a" style="left:285px;top:786px" width="30" height="30" viewBox="0 0 27 27"><path d="M12.11 3.60 A10 10 0 0 0 6.07 20.19" stroke="#4caf50" stroke-width="2.8" fill="none"/><path d="M9.75 24.28 L2.39 22.83 L9.08 16.81 Z" fill="#4caf50"/><path d="M14.89 23.40 A10 10 0 0 0 20.93 6.81" stroke="#4caf50" stroke-width="2.8" fill="none"/><path d="M17.25 2.72 L24.61 4.17 L17.92 10.19 Z" fill="#4caf50"/></svg>
<div class="a t" style="left:330px;top:791.82px;font-size:20.3px;color:#444444;font-weight:normal;transform:scaleX(0.9679);transform-origin:0 0;">Refresh</div>
<svg class="a" style="left:460px;top:440px" width="10" height="16" viewBox="0 0 10 16"><path d="M1 1 L9 8 L1 15 Z" fill="#fff"/></svg>
<svg class="a" style="left:460px;top:745px" width="10" height="16" viewBox="0 0 10 16"><path d="M1 1 L9 8 L1 15 Z" fill="#7a7a7a"/></svg>
<div class="a" style="left:484px;top:424px;width:364px;height:241px;background:#fff;box-shadow:0 2px 6px rgba(0,0,0,0.25)"></div>
<div class="a" style="left:484px;top:521px;width:364px;height:47px;background:#3a3d41"></div>
<svg class="a" style="left:494px;top:433px" width="30" height="32" viewBox="0 0 30 32"><rect x="1" y="0" width="28" height="3" fill="#00897b"/><path d="M15 6 L23.5 14.5 L18 14.5 L18 19 L12 19 L12 14.5 L6.5 14.5 Z" fill="#00897b"/><rect x="12" y="21" width="6" height="2.3" fill="#00897b"/><rect x="12" y="25" width="6" height="2.3" fill="#00897b"/><rect x="12" y="29" width="6" height="2.3" fill="#00897b"/></svg>
<div class="a t" style="left:539px;top:439.42px;font-size:20.3px;color:#444444;font-weight:normal;transform:scaleX(0.9713);transform-origin:0 0;">Upload Files</div>
<svg class="a" style="left:494px;top:481px" width="30" height="32" viewBox="0 0 30 32"><rect x="1" y="0" width="28" height="3" fill="#00897b"/><path d="M15 6 L23.5 14.5 L18 14.5 L18 19 L12 19 L12 14.5 L6.5 14.5 Z" fill="#00897b"/><rect x="12" y="21" width="6" height="2.3" fill="#00897b"/><rect x="12" y="25" width="6" height="2.3" fill="#00897b"/><rect x="12" y="29" width="6" height="2.3" fill="#00897b"/></svg>
<div class="a t" style="left:539px;top:487.42px;font-size:20.3px;color:#444444;font-weight:normal;transform:scaleX(1.0028);transform-origin:0 0;">Upload File (Compatibility Mode)</div>
<svg class="a" style="left:494px;top:530px" width="32" height="32" viewBox="0 0 32 32"><rect x="1" y="1" width="27" height="27" rx="4" fill="#ff9800"/><rect x="9" y="5" width="9" height="2" fill="#5d4037"/><rect x="11" y="10" width="19" height="1.6" fill="#00897b"/><path d="M19 13 L25 19 L21 19 L21 22 L17 22 L17 19 L13 19 Z" fill="#00897b"/><rect x="17" y="24" width="4" height="2" fill="#00897b"/><rect x="17" y="27.5" width="4" height="2" fill="#00897b"/></svg>
<div class="a t" style="left:539px;top:535.42px;font-size:20.3px;color:#fff;font-weight:normal;transform:scaleX(0.9833);transform-origin:0 0;">Upload ZIP Archive</div>
<svg class="a" style="left:493px;top:577px" width="32" height="32" viewBox="0 0 32 32"><rect x="4" y="4" width="24" height="24" rx="3" fill="#4caf50"/><rect x="9" y="10" width="14" height="11" fill="#37474f"/><rect x="8" y="0" width="2.5" height="3" fill="#ff9800"/><rect x="8" y="29" width="2.5" height="3" fill="#ff9800"/><rect x="0" y="8" width="3" height="2.5" fill="#ff9800"/><rect x="29" y="8" width="3" height="2.5" fill="#ff9800"/><rect x="13" y="0" width="2.5" height="3" fill="#ff9800"/><rect x="13" y="29" width="2.5" height="3" fill="#ff9800"/><rect x="0" y="13" width="3" height="2.5" fill="#ff9800"/><rect x="29" y="13" width="3" height="2.5" fill="#ff9800"/><rect x="18" y="0" width="2.5" height="3" fill="#ff9800"/><rect x="18" y="29" width="2.5" height="3" fill="#ff9800"/><rect x="0" y="18" width="3" height="2.5" fill="#ff9800"/><rect x="29" y="18" width="3" height="2.5" fill="#ff9800"/><rect x="23" y="0" width="2.5" height="3" fill="#ff9800"/><rect x="23" y="29" width="2.5" height="3" fill="#ff9800"/><rect x="0" y="23" width="3" height="2.5" fill="#ff9800"/><rect x="29" y="23" width="3" height="2.5" fill="#ff9800"/></svg>
<div class="a t" style="left:539px;top:583.42px;font-size:20.3px;color:#444444;font-weight:normal;transform:scaleX(1.0272);transform-origin:0 0;">Import from Server</div>
<svg class="a" style="left:492px;top:624px" width="34" height="34" viewBox="0 0 34 34"><circle cx="16" cy="16" r="15.5" fill="#1e88e5"/><path d="M5 7 C9 2 15 2 18 6 C16 10 12 10 11 14 C9 18 5 18 2 15 C1 12 2 9 5 7 Z" fill="#7cb342"/><path d="M19 10 C23 8 28 11 30 16 C31 22 28 27 23 29 C21 24 23 20 20 17 C18 15 17 12 19 10 Z" fill="#7cb342"/><path d="M8 20 C11 20 14 23 13 28 C9 27 7 24 8 20 Z" fill="#7cb342"/><circle cx="25" cy="25" r="7.5" fill="#4caf50"/><rect x="20.5" y="23.8" width="9" height="2.4" fill="#fff"/><rect x="23.8" y="20.5" width="2.4" height="9" fill="#fff"/></svg>
<div class="a t" style="left:539px;top:631.42px;font-size:20.3px;color:#444444;font-weight:normal;transform:scaleX(1.0152);transform-origin:0 0;">Import from URL</div>
</body></html>
